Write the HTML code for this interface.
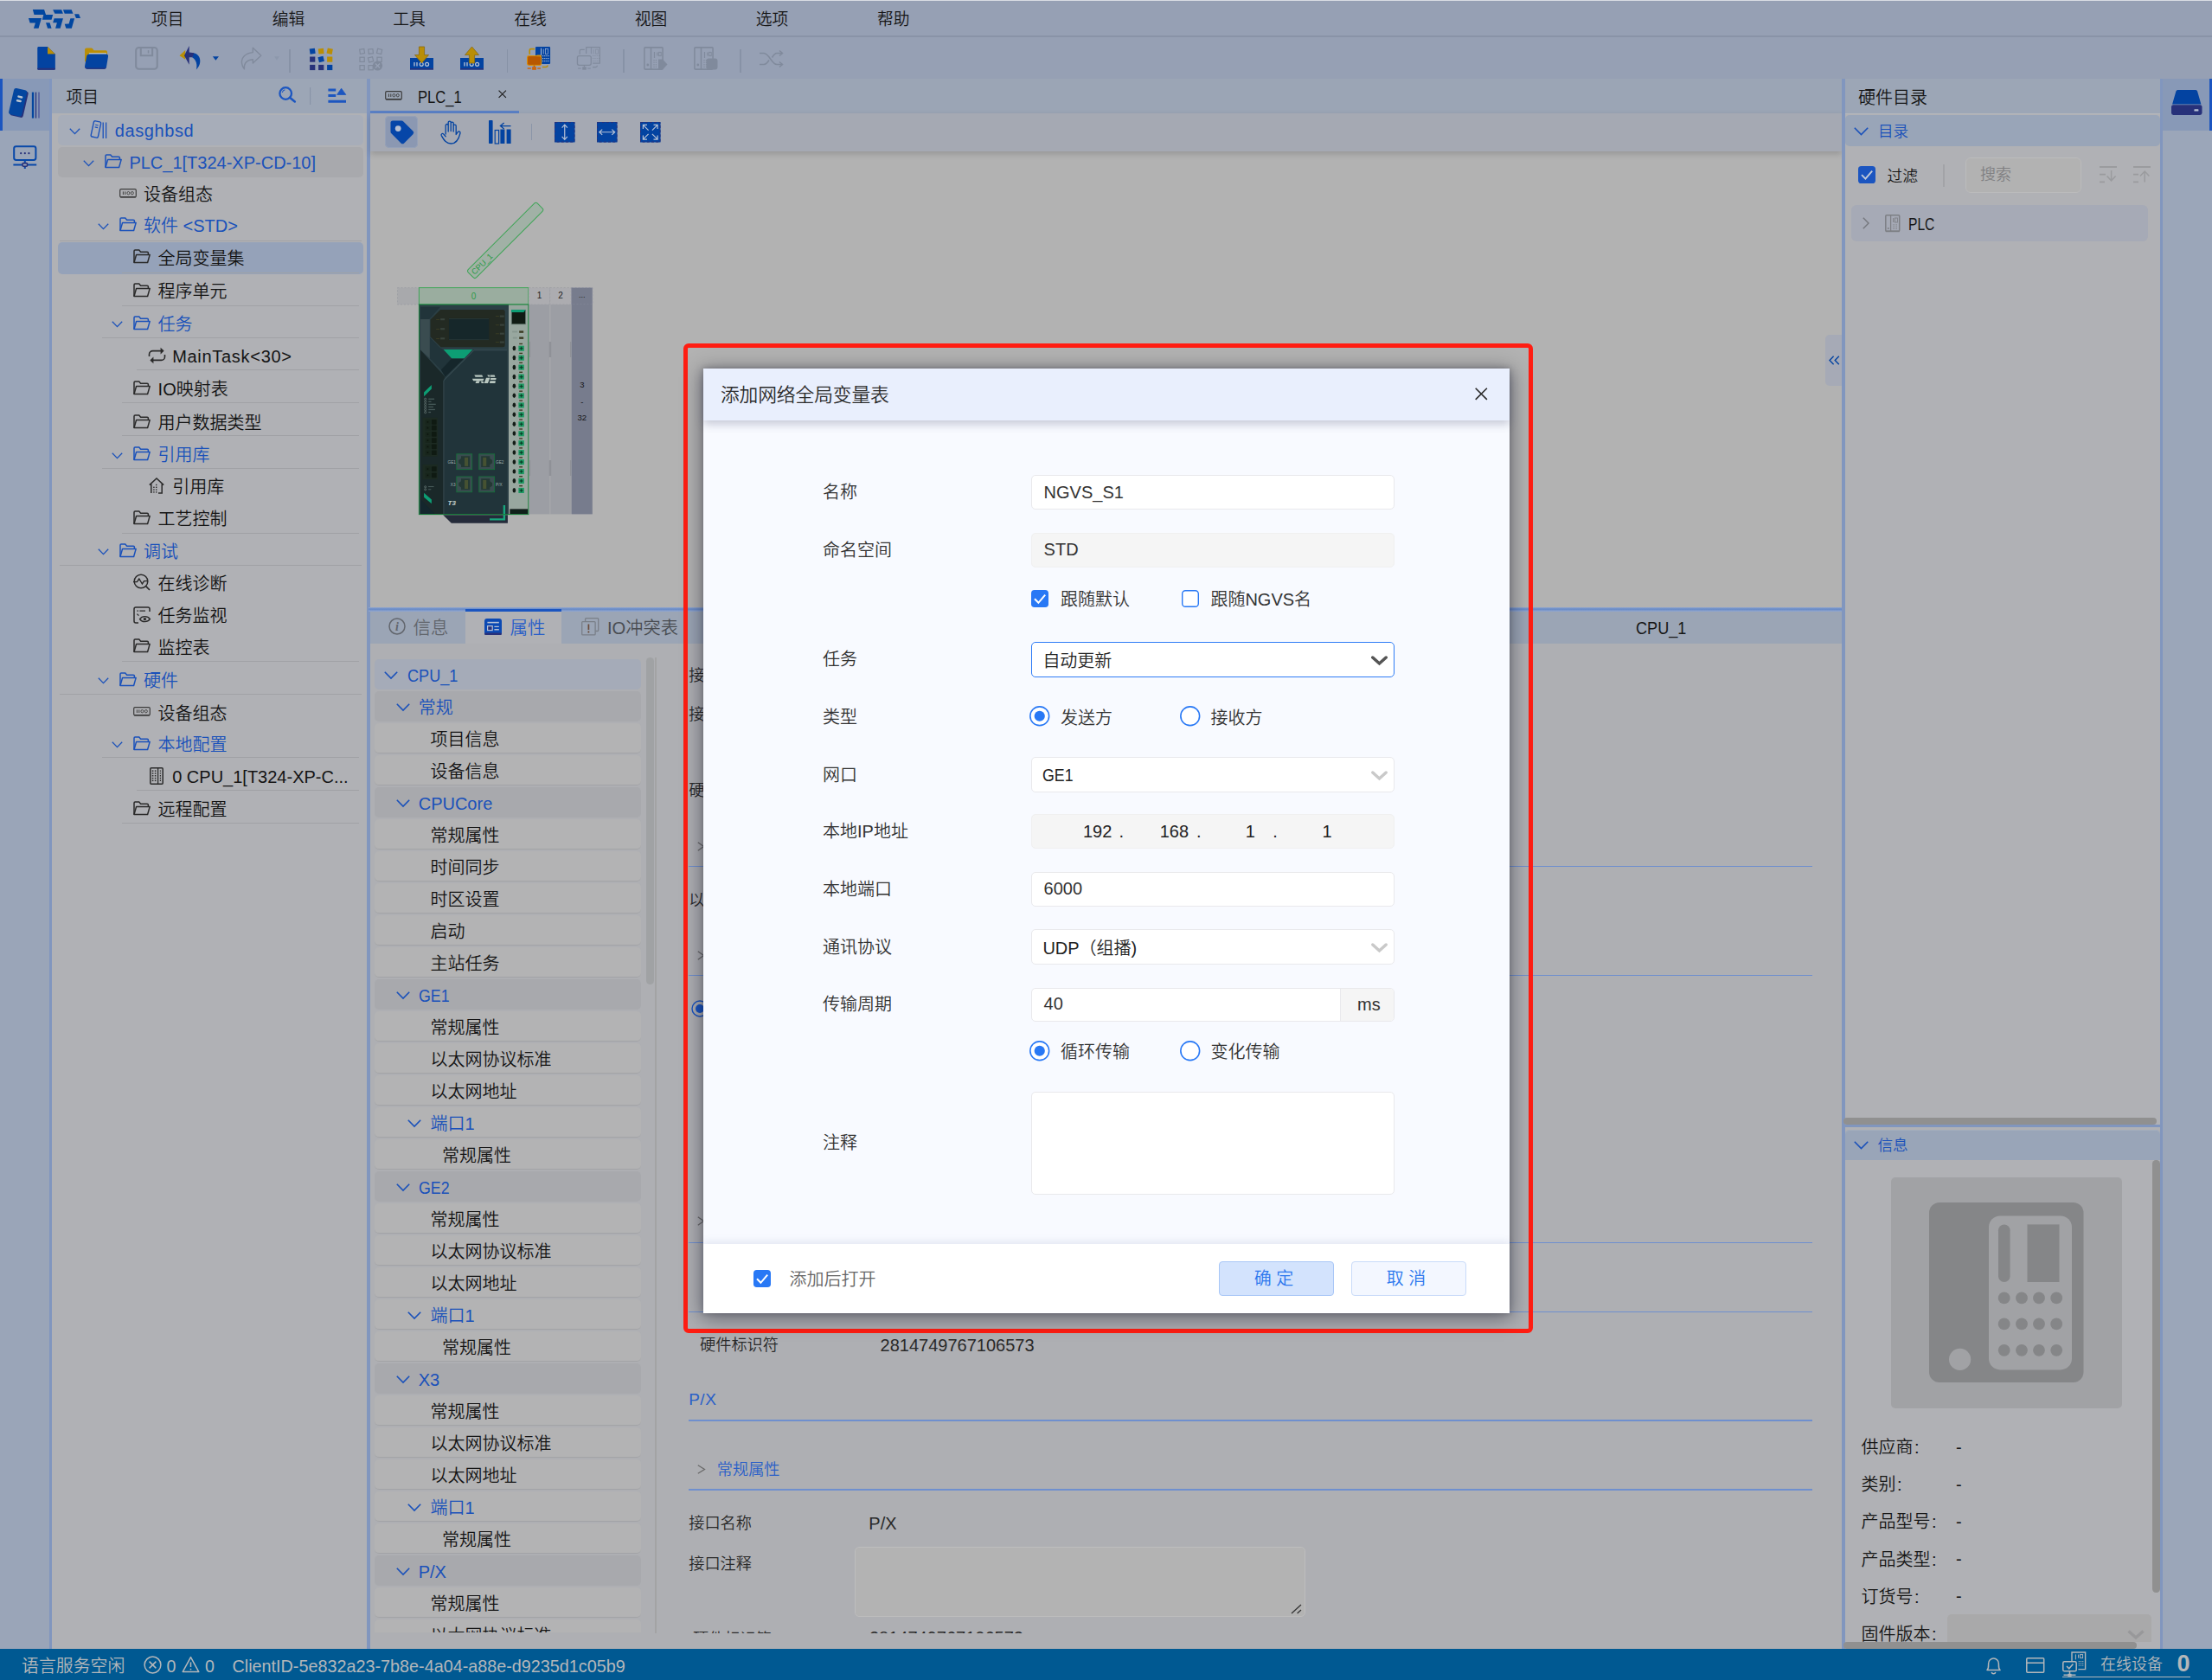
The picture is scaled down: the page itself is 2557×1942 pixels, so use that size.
<!DOCTYPE html>
<html lang="zh-CN"><head><meta charset="utf-8"><title>添加网络全局变量表</title>
<style>
html,body{margin:0;padding:0}
body{width:2557px;height:1942px;overflow:hidden;position:relative;background:#b0b1b5;
 font-family:"Liberation Sans","Noto Sans CJK SC",sans-serif;font-size:20px;color:#141414;font-weight:350}
.a{position:absolute;box-sizing:border-box}
.t{white-space:pre}
.b{color:#1a51ba}
svg{display:block;overflow:visible}
</style></head>
<body>
<div class="a" style="left:0px;top:0px;width:2557px;height:43px;background:#96a0b4;border-top:1px solid #d9dde4;border-bottom:2px solid #8993a7"></div>
<svg class="a" style="left:25px;top:5px" width="80" height="35" viewBox="0 0 2212 968" ><polygon points="355,165 720,165 775,330 1000,335 955,490 660,490 700,330 400,330" fill="#0046a0"/><polygon points="220,445 635,445 540,770 385,770 440,595 265,595" fill="#0046a0"/><polygon points="775,590 900,590 955,770 830,770" fill="#0046a0"/><polygon points="1000,170 1275,170 1325,300 1060,300" fill="#0046a0"/><polygon points="1325,170 1595,170 1645,300 1375,300" fill="#0046a0"/><polygon points="1690,310 1830,310 1880,440 1740,440" fill="#0046a0"/><polygon points="1040,450 1325,450 1235,770 1080,770 1130,590 1000,590" fill="#0046a0"/><polygon points="1560,450 1690,450 1600,770 1420,770 1375,628 1510,620" fill="#0046a0"/></svg>
<div class="a t" style="left:175px;top:2.7px;height:40px;line-height:40px;font-size:18.75px;color:#161616">项目</div>
<div class="a t" style="left:314.8px;top:2.7px;height:40px;line-height:40px;font-size:18.75px;color:#161616">编辑</div>
<div class="a t" style="left:454.3px;top:2.7px;height:40px;line-height:40px;font-size:18.75px;color:#161616">工具</div>
<div class="a t" style="left:594.3px;top:2.7px;height:40px;line-height:40px;font-size:18.75px;color:#161616">在线</div>
<div class="a t" style="left:733.8px;top:2.7px;height:40px;line-height:40px;font-size:18.75px;color:#161616">视图</div>
<div class="a t" style="left:873.8px;top:2.7px;height:40px;line-height:40px;font-size:18.75px;color:#161616">选项</div>
<div class="a t" style="left:1013.9px;top:2.7px;height:40px;line-height:40px;font-size:18.75px;color:#161616">帮助</div>
<div class="a" style="left:0px;top:43px;width:2557px;height:48px;background:#96a0b4"></div>
<svg class="a" style="left:30px;top:46px" width="170" height="44" viewBox="0 0 2212 573" ><path d="M190 105 H325 L440 215 V435 a18 18 0 0 1 -18 18 H190 a18 18 0 0 1 -18 -18 V123 a18 18 0 0 1 18 -18 Z" fill="#0343a1"/><path d="M172 425 H440 V437 a16 16 0 0 1 -16 16 H188 a16 16 0 0 1 -16 -16 Z" fill="#27317a"/><polygon points="325,105 440,215 325,215" fill="#ba8e06"/><path d="M318 215 H440 V232 H318 Z" fill="#0343a1" opacity="0.35"/><path d="M885 150 a25 25 0 0 1 25 -25 H985 a25 25 0 0 1 18 8 L1022 158 H1200 a22 22 0 0 1 22 22 V330 H885 Z" fill="#ba8e06"/><rect x="948" y="198" width="262" height="22" fill="#c9cfd8"/><path d="M960 215 H1205 a32 32 0 0 1 31 38 L1210 410 a36 36 0 0 1 -35 30 H920 a36 36 0 0 1 -35 -42 L912 250 a40 40 0 0 1 48 -35 Z" fill="#0343a1"/><path d="M886 405 C890 428 905 440 925 440 H1172 C1190 440 1204 430 1209 412 C1200 420 1190 424 1175 424 H922 C906 424 894 418 886 405 Z" fill="#27317a"/><rect x="1655" y="118" width="320" height="322" rx="44" fill="none" stroke="#808a9c" stroke-width="27"/><path d="M1728 120 V238 H1902 V120" fill="none" stroke="#808a9c" stroke-width="27"/><path d="M1842 158 V202" stroke="#808a9c" stroke-width="20"/></svg>
<svg class="a" style="left:196px;top:46px" width="150" height="44" viewBox="0 0 2212 649" ><polygon points="170,270 268,178 268,335" fill="#ba8e06"/><path d="M395 225 C470 225 530 290 520 380 C515 430 490 470 455 508 C475 440 460 340 385 300 Z" fill="#0343a1"/><polygon points="250,270 335,105 335,215 418,226 388,300 335,300 335,425" fill="#27317a"/><polygon points="735,285 840,285 787,352" fill="#0343a1"/><path d="M1560 270 L1420 135 V215 C1300 225 1220 300 1232 400 C1236 440 1250 470 1275 500 C1262 420 1300 345 1420 335 V400 Z" fill="none" stroke="#808a9c" stroke-width="20" stroke-linejoin="round"/><path d="M1300 480 C1270 400 1320 330 1415 322" fill="none" stroke="#808a9c" stroke-width="10" opacity="0.0"/><polygon points="1785,285 1872,285 1828,346" fill="#8d98ac"/></svg>
<div class="a" style="left:334px;top:57.2px;width:1.8px;height:26.4px;background:#8792a6"></div>
<svg class="a" style="left:358px;top:54.5px" width="27" height="27" viewBox="0 0 27 27" ><rect x="0.10000000000000009" y="1.1" width="6.2" height="6.2" fill="#0343a1" transform="rotate(-8 3.2 4.2)"/><rect x="10.1" y="1.1" width="6.2" height="6.2" fill="#ba8e06" transform="rotate(-6 13.2 4.2)"/><rect x="20.099999999999998" y="1.1" width="6.2" height="6.2" fill="#ba8e06" transform="rotate(12 23.2 4.2)"/><rect x="0.10000000000000009" y="10.500000000000002" width="6.2" height="6.2" fill="#27317a" transform="rotate(0 3.2 13.600000000000001)"/><rect x="10.1" y="10.500000000000002" width="6.2" height="6.2" fill="#0343a1" transform="rotate(-14 13.2 13.600000000000001)"/><rect x="20.099999999999998" y="10.500000000000002" width="6.2" height="6.2" fill="#ba8e06" transform="rotate(0 23.2 13.600000000000001)"/><rect x="0.10000000000000009" y="19.9" width="6.2" height="6.2" fill="#27317a" transform="rotate(0 3.2 23.0)"/><rect x="10.1" y="19.9" width="6.2" height="6.2" fill="#27317a" transform="rotate(0 13.2 23.0)"/><rect x="20.099999999999998" y="19.9" width="6.2" height="6.2" fill="#0343a1" transform="rotate(0 23.2 23.0)"/></svg>
<svg class="a" style="left:415px;top:54.5px" width="28" height="27" viewBox="0 0 28 27" ><rect x="1.0" y="1.8000000000000003" width="5.2" height="5.2" fill="none" stroke="#808a9c" stroke-width="1.2" transform="rotate(-8 3.6 4.4)"/><rect x="11.0" y="1.8000000000000003" width="5.2" height="5.2" fill="none" stroke="#808a9c" stroke-width="1.2" transform="rotate(-6 13.6 4.4)"/><rect x="21.0" y="1.8000000000000003" width="5.2" height="5.2" fill="none" stroke="#808a9c" stroke-width="1.2" transform="rotate(12 23.6 4.4)"/><rect x="1.0" y="11.200000000000001" width="5.2" height="5.2" fill="none" stroke="#808a9c" stroke-width="1.2" transform="rotate(0 3.6 13.8)"/><rect x="11.0" y="11.200000000000001" width="5.2" height="5.2" fill="none" stroke="#808a9c" stroke-width="1.2" transform="rotate(-14 13.6 13.8)"/><rect x="21.0" y="11.200000000000001" width="5.2" height="5.2" fill="none" stroke="#808a9c" stroke-width="1.2" transform="rotate(0 23.6 13.8)"/><rect x="1.0" y="20.6" width="5.2" height="5.2" fill="none" stroke="#808a9c" stroke-width="1.2" transform="rotate(0 3.6 23.200000000000003)"/><rect x="11.0" y="20.6" width="5.2" height="5.2" fill="none" stroke="#808a9c" stroke-width="1.2" transform="rotate(0 13.6 23.200000000000003)"/><circle cx="21.5" cy="21" r="5.6" fill="#808a9c"/><path d="M19 18.5l5 5M24 18.5l-5 5" stroke="#96a0b4" stroke-width="1.4"/></svg>
<svg class="a" style="left:474px;top:54px" width="27" height="27" viewBox="0 0 27 27" ><rect x="0" y="13" width="27" height="13.5" fill="#0343a1"/><rect x="0" y="25" width="27" height="1.5" fill="#27317a"/><path d="M5 18v4.6M8 18v4.6" stroke="#b9c4d6" stroke-width="1.3"/><circle cx="13.2" cy="20.3" r="2" fill="none" stroke="#b9c4d6" stroke-width="1.2"/><circle cx="19.6" cy="20.3" r="2" fill="none" stroke="#b9c4d6" stroke-width="1.2"/><path d="M10.4 0 H16.6 V9.5 H21.5 L13.5 19 L5.5 9.5 H10.4 Z" fill="#ba8e06" stroke="#8a6a10" stroke-width="0.8"/></svg>
<svg class="a" style="left:532px;top:54px" width="27" height="27" viewBox="0 0 27 27" ><rect x="0" y="13" width="27" height="13.5" fill="#0343a1"/><rect x="0" y="25" width="27" height="1.5" fill="#27317a"/><path d="M5 18v4.6M8 18v4.6" stroke="#b9c4d6" stroke-width="1.3"/><circle cx="13.2" cy="20.3" r="2" fill="none" stroke="#b9c4d6" stroke-width="1.2"/><circle cx="19.6" cy="20.3" r="2" fill="none" stroke="#b9c4d6" stroke-width="1.2"/><path d="M13.5 0 L21.5 9.5 H16.6 V19 H10.4 V9.5 H5.5 Z" fill="#ba8e06" stroke="#8a6a10" stroke-width="0.8"/></svg>
<div class="a" style="left:585.6px;top:57.2px;width:1.8px;height:26.4px;background:#8792a6"></div>
<svg class="a" style="left:600px;top:46px" width="100" height="44" viewBox="0 0 2212 973" ><rect x="420" y="175" width="378" height="445" rx="22" fill="#0343a1"/><path d="M565 215 V400" stroke="#c4cddd" stroke-width="20"/><path d="M625 235 V365" stroke="#c4cddd" stroke-width="14"/><rect x="672" y="235" width="72" height="130" fill="none" stroke="#c4cddd" stroke-width="13"/><rect x="600" y="400" width="24" height="24" fill="#c4cddd"/><rect x="600" y="466" width="24" height="24" fill="#c4cddd"/><rect x="600" y="532" width="24" height="24" fill="#c4cddd"/><rect x="647" y="400" width="24" height="24" fill="#c4cddd"/><rect x="647" y="466" width="24" height="24" fill="#c4cddd"/><rect x="647" y="532" width="24" height="24" fill="#c4cddd"/><rect x="694" y="400" width="24" height="24" fill="#c4cddd"/><rect x="694" y="466" width="24" height="24" fill="#c4cddd"/><rect x="694" y="532" width="24" height="24" fill="#c4cddd"/><rect x="741" y="400" width="24" height="24" fill="#c4cddd"/><rect x="741" y="466" width="24" height="24" fill="#c4cddd"/><rect x="741" y="532" width="24" height="24" fill="#c4cddd"/><path d="M270 370 V270 a35 35 0 0 1 35 -35 H400" fill="none" stroke="#ba8e06" stroke-width="36"/><path d="M595 695 H690 a40 40 0 0 0 40 -40" fill="none" stroke="#ba8e06" stroke-width="32"/><rect x="212" y="410" width="356" height="238" rx="42" fill="#b85800" stroke="#d98f0c" stroke-width="26"/><rect x="440" y="385" width="130" height="60" rx="30" fill="#d98f0c"/><rect x="230" y="428" width="320" height="202" rx="30" fill="#b85800"/><rect x="370" y="655" width="34" height="40" fill="#b85800"/><rect x="335" y="690" width="105" height="80" fill="#cf6408"/><rect x="215" y="715" width="90" height="32" fill="#cf6408"/><rect x="470" y="715" width="82" height="32" fill="#cf6408"/></svg>
<svg class="a" style="left:600px;top:46px" width="100" height="44" viewBox="0 0 2212 973" ><path d="M1718 355 V190 H2065 V600 H1885" fill="none" stroke="#808a9c" stroke-width="26" stroke-linejoin="round"/><path d="M1845 200 V355" stroke="#808a9c" stroke-width="20"/><path d="M1905 245 V355" stroke="#808a9c" stroke-width="14"/><rect x="1962" y="245" width="62" height="110" fill="none" stroke="#808a9c" stroke-width="14"/><rect x="1885" y="402" width="22" height="18" fill="#808a9c"/><rect x="1885" y="468" width="22" height="18" fill="#808a9c"/><rect x="1885" y="534" width="22" height="18" fill="#808a9c"/><rect x="1935" y="402" width="22" height="18" fill="#808a9c"/><rect x="1935" y="468" width="22" height="18" fill="#808a9c"/><rect x="1935" y="534" width="22" height="18" fill="#808a9c"/><rect x="1985" y="402" width="22" height="18" fill="#808a9c"/><rect x="1985" y="468" width="22" height="18" fill="#808a9c"/><rect x="1985" y="534" width="22" height="18" fill="#808a9c"/><rect x="2035" y="402" width="22" height="18" fill="#808a9c"/><rect x="2035" y="468" width="22" height="18" fill="#808a9c"/><rect x="2035" y="534" width="22" height="18" fill="#808a9c"/><path d="M1552 370 V285 a35 35 0 0 1 35 -35 H1675" fill="none" stroke="#808a9c" stroke-width="26"/><path d="M1880 700 H1960 a40 40 0 0 0 40 -40" fill="none" stroke="#808a9c" stroke-width="24"/><rect x="1492" y="412" width="350" height="236" rx="44" fill="none" stroke="#808a9c" stroke-width="28"/><rect x="1655" y="655" width="26" height="40" fill="#808a9c"/><rect x="1620" y="695" width="100" height="72" fill="#808a9c"/><rect x="1505" y="718" width="80" height="28" fill="#808a9c" opacity="0.8"/><rect x="1752" y="718" width="80" height="28" fill="#808a9c" opacity="0.8"/></svg>
<div class="a" style="left:720.2px;top:57.2px;width:1.8px;height:26.4px;background:#8792a6"></div>
<svg class="a" style="left:744px;top:54px" width="28" height="27" viewBox="0 0 28 27" ><rect x="0.9" y="0.9" width="21.2" height="25.2" rx="1" fill="none" stroke="#808a9c" stroke-width="1.6"/><path d="M8.5 1v25" stroke="#808a9c" stroke-width="1.6"/><circle cx="4.8" cy="21" r="1.4" fill="#808a9c"/><path d="M12.5 6v7M15.8 6.4v4.2" stroke="#808a9c" stroke-width="1.2"/><rect x="17.6" y="6.4" width="2.6" height="4.2" fill="none" stroke="#808a9c" stroke-width="1"/><rect x="11.4" y="15.0" width="1.2" height="1.2" fill="#808a9c"/><rect x="11.4" y="17.6" width="1.2" height="1.2" fill="#808a9c"/><rect x="11.4" y="20.2" width="1.2" height="1.2" fill="#808a9c"/><rect x="11.4" y="22.8" width="1.2" height="1.2" fill="#808a9c"/><rect x="13.8" y="15.0" width="1.2" height="1.2" fill="#808a9c"/><rect x="13.8" y="17.6" width="1.2" height="1.2" fill="#808a9c"/><rect x="13.8" y="20.2" width="1.2" height="1.2" fill="#808a9c"/><rect x="13.8" y="22.8" width="1.2" height="1.2" fill="#808a9c"/><path d="M17 14.5 H22 L27.5 20.5 L22 26.5 H17 Z" fill="#808a9c"/></svg>
<svg class="a" style="left:802px;top:54px" width="28" height="27" viewBox="0 0 28 27" ><rect x="0.9" y="0.9" width="21.2" height="25.2" rx="1" fill="none" stroke="#808a9c" stroke-width="1.6"/><path d="M8.5 1v25" stroke="#808a9c" stroke-width="1.6"/><circle cx="4.8" cy="21" r="1.4" fill="#808a9c"/><path d="M12.5 6v7M15.8 6.4v4.2" stroke="#808a9c" stroke-width="1.2"/><rect x="17.6" y="6.4" width="2.6" height="4.2" fill="none" stroke="#808a9c" stroke-width="1"/><rect x="11.4" y="15.0" width="1.2" height="1.2" fill="#808a9c"/><rect x="11.4" y="17.6" width="1.2" height="1.2" fill="#808a9c"/><rect x="11.4" y="20.2" width="1.2" height="1.2" fill="#808a9c"/><rect x="11.4" y="22.8" width="1.2" height="1.2" fill="#808a9c"/><rect x="13.8" y="15.0" width="1.2" height="1.2" fill="#808a9c"/><rect x="13.8" y="17.6" width="1.2" height="1.2" fill="#808a9c"/><rect x="13.8" y="20.2" width="1.2" height="1.2" fill="#808a9c"/><rect x="13.8" y="22.8" width="1.2" height="1.2" fill="#808a9c"/><rect x="14.5" y="13.5" width="13" height="13" rx="3" fill="#808a9c"/></svg>
<div class="a" style="left:855.2px;top:57.2px;width:1.8px;height:26.4px;background:#8792a6"></div>
<svg class="a" style="left:878px;top:58px" width="28" height="20" viewBox="0 0 28 20" ><path d="M0 3.5 H5 C11 3.5 14 16.5 20 16.5 H26 M0 16.5 H5 C8 16.5 9.5 14 11 11.5 M14.5 8.5 C16 6 17.5 3.5 20 3.5 H26" fill="none" stroke="#808a9c" stroke-width="1.5"/><path d="M23 0.5 L26.5 3.5 L23 6.5 M23 13.5 L26.5 16.5 L23 19.5" fill="none" stroke="#808a9c" stroke-width="1.5"/></svg>
<div class="a" style="left:0px;top:91px;width:57px;height:1815px;background:#9aa5b8"></div>
<div class="a" style="left:0px;top:91px;width:57px;height:60px;background:#8899b7"></div>
<div class="a" style="left:0px;top:91px;width:3px;height:60px;background:#1b55c0"></div>
<svg class="a" style="left:11px;top:102px" width="36" height="36" viewBox="0 0 36 36" ><g transform="rotate(13 11.5 18)"><rect x="3.4" y="2.2" width="15.4" height="31" rx="2.6" fill="#27317a"/><rect x="1.6" y="1.2" width="15.4" height="31" rx="2.6" fill="#04469f"/><rect x="7.4" y="8.8" width="6.2" height="2.5" rx="1.25" fill="#b9c4d0"/><rect x="7" y="13.6" width="6.2" height="2.5" rx="1.25" fill="#b9c4d0"/></g><path d="M27 4.6v30" stroke="#04469f" stroke-width="2.3"/><path d="M30.5 4.6v30" stroke="#27317a" stroke-width="1.3"/><path d="M34 4.6v30" stroke="#56609f" stroke-width="1.6"/></svg>
<svg class="a" style="left:15px;top:168px" width="28" height="27" viewBox="0 0 28 27" ><rect x="1.2" y="1.2" width="25.2" height="15.8" rx="2.4" fill="none" stroke="#0848a8" stroke-width="2"/><circle cx="9.2" cy="9.2" r="1.1" fill="#27317a"/><circle cx="13.8" cy="9.2" r="1.1" fill="#27317a"/><circle cx="18.4" cy="9.2" r="1.1" fill="#27317a"/><path d="M13.8 17v4M0.4 22.4h10.5M16.8 22.4h10.4M13.8 24v3" stroke="#0848a8" stroke-width="2"/><rect x="11" y="20.6" width="5.6" height="3.6" rx="1.2" fill="none" stroke="#27317a" stroke-width="1.6"/></svg>
<div class="a" style="left:56.8px;top:91px;width:3.4px;height:1815px;background:#8196be"></div>
<div class="a" style="left:60px;top:91px;width:365px;height:40px;background:#9ca6b6"></div>
<div class="a t" style="left:76.5px;top:93.2px;height:40px;line-height:40px;font-size:18.75px;color:#161616">项目</div>
<svg class="a" style="left:322px;top:100px" width="20" height="18.5" viewBox="0 0 20 18.5" ><circle cx="8.2" cy="8" r="6.8" fill="none" stroke="#1c56c0" stroke-width="2.3"/><path d="M13 12.8 L18.8 17.4" stroke="#1c56c0" stroke-width="2.6" stroke-linecap="round"/><path d="M4.2 7 a4.2 4.2 0 0 1 3.2 -3.2" fill="none" stroke="#1c56c0" stroke-width="1.1"/></svg>
<div class="a" style="left:358px;top:101px;width:2.4px;height:19.5px;background:linear-gradient(90deg,#8590a3,#8d98ab 55%,#a7b0c0)"></div>
<svg class="a" style="left:379px;top:101px" width="22" height="18.5" viewBox="0 0 22 18.5" ><path d="M0.4 2.9h8.8M0.4 9.4h8.8M0.4 16.2h20.6" stroke="#1c56c0" stroke-width="3"/><path d="M10.6 8.4 L15.6 1.2 L20.8 8.4 Z" fill="#1c56c0" stroke="#1c56c0" stroke-width="0.8" stroke-linejoin="round"/></svg>
<div class="a" style="left:60px;top:131px;width:365px;height:1775px;background:#b0b1b5"></div>
<div class="a" style="left:424.4px;top:91px;width:3.6px;height:1815px;background:#8196be"></div>
<div class="a" style="left:67px;top:133.2px;width:353px;height:34.4px;background:#a7adb9;border-radius:5px"></div>
<svg class="a" style="left:79.6px;top:147.6px" width="13" height="7.6" viewBox="0 0 13 7.6" ><path d="M0.8 0.8 L6.5 6.6 L12.2 0.8" fill="none" stroke="#1a51ba" stroke-width="1.3"/></svg>
<svg class="a" style="left:105.3px;top:139.2px" width="19" height="22" viewBox="0 0 19 22" ><g transform="rotate(12 6 11)"><rect x="1.6" y="1.2" width="8.4" height="18.6" rx="1.6" fill="none" stroke="#1a51ba" stroke-width="1.4"/><path d="M4 5.6h3.6M4 8.2h3.6" stroke="#1a51ba" stroke-width="1.1"/></g><path d="M14.2 2.5v18.5M17.6 2.5v18.5" stroke="#1a51ba" stroke-width="1.3"/></svg>
<div class="a t" style="left:132.8px;top:134.3px;height:34.4px;line-height:34.4px;color:#1a51ba;letter-spacing:0.6px">dasghbsd</div>
<div class="a" style="left:67px;top:170.2px;width:353px;height:34.4px;background:#a8a9ad;border-radius:5px"></div>
<svg class="a" style="left:96.19999999999999px;top:184.6px" width="13" height="7.6" viewBox="0 0 13 7.6" ><path d="M0.8 0.8 L6.5 6.6 L12.2 0.8" fill="none" stroke="#1a51ba" stroke-width="1.3"/></svg>
<svg class="a" style="left:120.9px;top:178.2px" width="20.5" height="17" viewBox="0 0 20.5 17" ><path d="M1 15.5 V2.2 a1.2 1.2 0 0 1 1.2 -1.2 h4.6 l1.8 2.2 h7.6 a1.2 1.2 0 0 1 1.2 1.2 v2" fill="none" stroke="#1a51ba" stroke-width="1.5" stroke-linejoin="round"/><path d="M1 15.5 L3.6 6.4 H19.2 L16.6 15.5 Z" fill="none" stroke="#1a51ba" stroke-width="1.5" stroke-linejoin="round"/></svg>
<div class="a t" style="left:149.4px;top:171.3px;height:34.4px;line-height:34.4px;color:#1a51ba">PLC_1[T324-XP-CD-10]</div>
<svg class="a" style="left:137.5px;top:218.3px" width="20" height="11" viewBox="0 0 20 11" ><rect x="0.7" y="0.7" width="18.6" height="9.2" rx="1.4" fill="none" stroke="#3c3c3c" stroke-width="1.2"/><path d="M1 9.7h18" stroke="#3c3c3c" stroke-width="1.5"/><path d="M4.4 3.4v3.6M6.8 3.4v3.6" stroke="#3c3c3c" stroke-width="1"/><ellipse cx="10.4" cy="5.2" rx="1.5" ry="1.7" fill="none" stroke="#3c3c3c" stroke-width="0.9"/><ellipse cx="14.8" cy="5.2" rx="1.5" ry="1.7" fill="none" stroke="#3c3c3c" stroke-width="0.9"/></svg>
<div class="a t" style="left:166.0px;top:208.4px;height:34.4px;line-height:34.4px;color:#141414">设备组态</div>
<svg class="a" style="left:112.8px;top:257.7px" width="13" height="7.6" viewBox="0 0 13 7.6" ><path d="M0.8 0.8 L6.5 6.6 L12.2 0.8" fill="none" stroke="#1a51ba" stroke-width="1.3"/></svg>
<svg class="a" style="left:137.5px;top:251.3px" width="20.5" height="17" viewBox="0 0 20.5 17" ><path d="M1 15.5 V2.2 a1.2 1.2 0 0 1 1.2 -1.2 h4.6 l1.8 2.2 h7.6 a1.2 1.2 0 0 1 1.2 1.2 v2" fill="none" stroke="#1a51ba" stroke-width="1.5" stroke-linejoin="round"/><path d="M1 15.5 L3.6 6.4 H19.2 L16.6 15.5 Z" fill="none" stroke="#1a51ba" stroke-width="1.5" stroke-linejoin="round"/></svg>
<div class="a t" style="left:166.0px;top:244.4px;height:34.4px;line-height:34.4px;color:#1a51ba">软件 &lt;STD&gt;</div>
<div class="a" style="left:69px;top:277.7px;width:349px;height:1.2px;background:#a0a1a5"></div>
<div class="a" style="left:67px;top:280.3px;width:353px;height:36.4px;background:#95a2b9;border-radius:5px"></div>
<svg class="a" style="left:154.1px;top:288.4px" width="20.5" height="17" viewBox="0 0 20.5 17" ><path d="M1 15.5 V2.2 a1.2 1.2 0 0 1 1.2 -1.2 h4.6 l1.8 2.2 h7.6 a1.2 1.2 0 0 1 1.2 1.2 v2" fill="none" stroke="#2a2a2a" stroke-width="1.5" stroke-linejoin="round"/><path d="M1 15.5 L3.6 6.4 H19.2 L16.6 15.5 Z" fill="none" stroke="#2a2a2a" stroke-width="1.5" stroke-linejoin="round"/></svg>
<div class="a t" style="left:182.6px;top:281.5px;height:34.4px;line-height:34.4px;color:#141414">全局变量集</div>
<div class="a" style="left:141px;top:314.8px;width:274px;height:1.2px;background:#a0a1a5"></div>
<svg class="a" style="left:154.1px;top:326.6px" width="20.5" height="17" viewBox="0 0 20.5 17" ><path d="M1 15.5 V2.2 a1.2 1.2 0 0 1 1.2 -1.2 h4.6 l1.8 2.2 h7.6 a1.2 1.2 0 0 1 1.2 1.2 v2" fill="none" stroke="#2a2a2a" stroke-width="1.5" stroke-linejoin="round"/><path d="M1 15.5 L3.6 6.4 H19.2 L16.6 15.5 Z" fill="none" stroke="#2a2a2a" stroke-width="1.5" stroke-linejoin="round"/></svg>
<div class="a t" style="left:182.6px;top:319.7px;height:34.4px;line-height:34.4px;color:#141414">程序单元</div>
<div class="a" style="left:141px;top:352.7px;width:274px;height:1.2px;background:#a0a1a5"></div>
<svg class="a" style="left:129.4px;top:371.0px" width="13" height="7.6" viewBox="0 0 13 7.6" ><path d="M0.8 0.8 L6.5 6.6 L12.2 0.8" fill="none" stroke="#1a51ba" stroke-width="1.3"/></svg>
<svg class="a" style="left:154.1px;top:364.6px" width="20.5" height="17" viewBox="0 0 20.5 17" ><path d="M1 15.5 V2.2 a1.2 1.2 0 0 1 1.2 -1.2 h4.6 l1.8 2.2 h7.6 a1.2 1.2 0 0 1 1.2 1.2 v2" fill="none" stroke="#1a51ba" stroke-width="1.5" stroke-linejoin="round"/><path d="M1 15.5 L3.6 6.4 H19.2 L16.6 15.5 Z" fill="none" stroke="#1a51ba" stroke-width="1.5" stroke-linejoin="round"/></svg>
<div class="a t" style="left:182.6px;top:357.7px;height:34.4px;line-height:34.4px;color:#1a51ba">任务</div>
<div class="a" style="left:118px;top:389.8px;width:297px;height:1.2px;background:#a0a1a5"></div>
<svg class="a" style="left:170.7px;top:401.3px" width="21" height="20" viewBox="0 0 21 20" ><path d="M1.5 11 V8.6 a4 4 0 0 1 4 -4 H17.5 M19.5 9 v2.4 a4 4 0 0 1 -4 4 H3.5" fill="none" stroke="#2a2a2a" stroke-width="1.6"/><path d="M14.6 0.8 L18.6 4.6 L14.6 8.4 Z M6.4 11.6 L2.4 15.4 L6.4 19.2 Z" fill="#2a2a2a"/></svg>
<div class="a t" style="left:199.2px;top:395.4px;height:34.4px;line-height:34.4px;color:#141414;letter-spacing:0.7px">MainTask&lt;30&gt;</div>
<div class="a" style="left:158px;top:427.1px;width:257px;height:1.2px;background:#a0a1a5"></div>
<svg class="a" style="left:154.1px;top:440.2px" width="20.5" height="17" viewBox="0 0 20.5 17" ><path d="M1 15.5 V2.2 a1.2 1.2 0 0 1 1.2 -1.2 h4.6 l1.8 2.2 h7.6 a1.2 1.2 0 0 1 1.2 1.2 v2" fill="none" stroke="#2a2a2a" stroke-width="1.5" stroke-linejoin="round"/><path d="M1 15.5 L3.6 6.4 H19.2 L16.6 15.5 Z" fill="none" stroke="#2a2a2a" stroke-width="1.5" stroke-linejoin="round"/></svg>
<div class="a t" style="left:182.6px;top:433.3px;height:34.4px;line-height:34.4px;color:#141414">IO映射表</div>
<div class="a" style="left:141px;top:464.8px;width:274px;height:1.2px;background:#a0a1a5"></div>
<svg class="a" style="left:154.1px;top:478.7px" width="20.5" height="17" viewBox="0 0 20.5 17" ><path d="M1 15.5 V2.2 a1.2 1.2 0 0 1 1.2 -1.2 h4.6 l1.8 2.2 h7.6 a1.2 1.2 0 0 1 1.2 1.2 v2" fill="none" stroke="#2a2a2a" stroke-width="1.5" stroke-linejoin="round"/><path d="M1 15.5 L3.6 6.4 H19.2 L16.6 15.5 Z" fill="none" stroke="#2a2a2a" stroke-width="1.5" stroke-linejoin="round"/></svg>
<div class="a t" style="left:182.6px;top:471.8px;height:34.4px;line-height:34.4px;color:#141414">用户数据类型</div>
<div class="a" style="left:141px;top:502.7px;width:274px;height:1.2px;background:#a0a1a5"></div>
<svg class="a" style="left:129.4px;top:522.6px" width="13" height="7.6" viewBox="0 0 13 7.6" ><path d="M0.8 0.8 L6.5 6.6 L12.2 0.8" fill="none" stroke="#1a51ba" stroke-width="1.3"/></svg>
<svg class="a" style="left:154.1px;top:516.2px" width="20.5" height="17" viewBox="0 0 20.5 17" ><path d="M1 15.5 V2.2 a1.2 1.2 0 0 1 1.2 -1.2 h4.6 l1.8 2.2 h7.6 a1.2 1.2 0 0 1 1.2 1.2 v2" fill="none" stroke="#1a51ba" stroke-width="1.5" stroke-linejoin="round"/><path d="M1 15.5 L3.6 6.4 H19.2 L16.6 15.5 Z" fill="none" stroke="#1a51ba" stroke-width="1.5" stroke-linejoin="round"/></svg>
<div class="a t" style="left:182.6px;top:509.3px;height:34.4px;line-height:34.4px;color:#1a51ba">引用库</div>
<div class="a" style="left:118px;top:540.7px;width:297px;height:1.2px;background:#a0a1a5"></div>
<svg class="a" style="left:171.7px;top:551.7px" width="18" height="19" viewBox="0 0 18 19" ><path d="M0.8 8.6 L9 1 L17.2 8.6 M2.8 7.4 V18 M15.2 7.4 V18 H11" fill="none" stroke="#2a2a2a" stroke-width="1.5"/><rect x="5.2" y="10.6" width="1.4" height="1.4" fill="#2a2a2a"/><rect x="5.2" y="13.399999999999999" width="1.4" height="1.4" fill="#2a2a2a"/><rect x="5.2" y="16.2" width="1.4" height="1.4" fill="#2a2a2a"/><rect x="8.0" y="10.6" width="1.4" height="1.4" fill="#2a2a2a"/><rect x="8.0" y="13.399999999999999" width="1.4" height="1.4" fill="#2a2a2a"/><rect x="8.0" y="16.2" width="1.4" height="1.4" fill="#2a2a2a"/><rect x="8" y="7.8" width="1.4" height="1.4" fill="#2a2a2a"/></svg>
<div class="a t" style="left:199.2px;top:545.8px;height:34.4px;line-height:34.4px;color:#141414">引用库</div>
<svg class="a" style="left:154.1px;top:590.2px" width="20.5" height="17" viewBox="0 0 20.5 17" ><path d="M1 15.5 V2.2 a1.2 1.2 0 0 1 1.2 -1.2 h4.6 l1.8 2.2 h7.6 a1.2 1.2 0 0 1 1.2 1.2 v2" fill="none" stroke="#2a2a2a" stroke-width="1.5" stroke-linejoin="round"/><path d="M1 15.5 L3.6 6.4 H19.2 L16.6 15.5 Z" fill="none" stroke="#2a2a2a" stroke-width="1.5" stroke-linejoin="round"/></svg>
<div class="a t" style="left:182.6px;top:583.3px;height:34.4px;line-height:34.4px;color:#141414">工艺控制</div>
<div class="a" style="left:141px;top:615.6px;width:274px;height:1.2px;background:#a0a1a5"></div>
<svg class="a" style="left:112.8px;top:634.4px" width="13" height="7.6" viewBox="0 0 13 7.6" ><path d="M0.8 0.8 L6.5 6.6 L12.2 0.8" fill="none" stroke="#1a51ba" stroke-width="1.3"/></svg>
<svg class="a" style="left:137.5px;top:628.0px" width="20.5" height="17" viewBox="0 0 20.5 17" ><path d="M1 15.5 V2.2 a1.2 1.2 0 0 1 1.2 -1.2 h4.6 l1.8 2.2 h7.6 a1.2 1.2 0 0 1 1.2 1.2 v2" fill="none" stroke="#1a51ba" stroke-width="1.5" stroke-linejoin="round"/><path d="M1 15.5 L3.6 6.4 H19.2 L16.6 15.5 Z" fill="none" stroke="#1a51ba" stroke-width="1.5" stroke-linejoin="round"/></svg>
<div class="a t" style="left:166.0px;top:621.1px;height:34.4px;line-height:34.4px;color:#1a51ba">调试</div>
<div class="a" style="left:69px;top:652.9px;width:349px;height:1.2px;background:#a0a1a5"></div>
<svg class="a" style="left:154.1px;top:663.4px" width="20" height="20" viewBox="0 0 20 20" ><circle cx="9" cy="9" r="7.8" fill="none" stroke="#2a2a2a" stroke-width="1.5"/><path d="M14.6 14.6 L19 19" stroke="#2a2a2a" stroke-width="1.7"/><path d="M0 9.6 H4.4 L6.8 6 L10.4 12 L12.6 8.6 H16" fill="none" stroke="#2a2a2a" stroke-width="1.4"/></svg>
<div class="a t" style="left:182.6px;top:657.5px;height:34.4px;line-height:34.4px;color:#141414">在线诊断</div>
<svg class="a" style="left:154.1px;top:700.6px" width="20" height="20" viewBox="0 0 20 20" ><path d="M19 6 V3 a2 2 0 0 0 -2 -2 H3 a2 2 0 0 0 -2 2 V17 a2 2 0 0 0 2 2 H6" fill="none" stroke="#2a2a2a" stroke-width="1.5"/><path d="M4.4 5.2 h1.6 M7.4 5.2 H14 M4.4 8.6 l2 2" stroke="#2a2a2a" stroke-width="1.3"/><path d="M7.6 14.6 C10 10.6 16.6 10.6 19.4 14.6 C16.6 18.6 10 18.6 7.6 14.6 Z" fill="none" stroke="#2a2a2a" stroke-width="1.4"/><circle cx="13.4" cy="14.6" r="1.7" fill="#2a2a2a"/></svg>
<div class="a t" style="left:182.6px;top:694.7px;height:34.4px;line-height:34.4px;color:#141414">任务监视</div>
<svg class="a" style="left:154.1px;top:738.4px" width="20.5" height="17" viewBox="0 0 20.5 17" ><path d="M1 15.5 V2.2 a1.2 1.2 0 0 1 1.2 -1.2 h4.6 l1.8 2.2 h7.6 a1.2 1.2 0 0 1 1.2 1.2 v2" fill="none" stroke="#2a2a2a" stroke-width="1.5" stroke-linejoin="round"/><path d="M1 15.5 L3.6 6.4 H19.2 L16.6 15.5 Z" fill="none" stroke="#2a2a2a" stroke-width="1.5" stroke-linejoin="round"/></svg>
<div class="a t" style="left:182.6px;top:731.5px;height:34.4px;line-height:34.4px;color:#141414">监控表</div>
<div class="a" style="left:141px;top:764.0px;width:274px;height:1.2px;background:#a0a1a5"></div>
<svg class="a" style="left:112.8px;top:783.3px" width="13" height="7.6" viewBox="0 0 13 7.6" ><path d="M0.8 0.8 L6.5 6.6 L12.2 0.8" fill="none" stroke="#1a51ba" stroke-width="1.3"/></svg>
<svg class="a" style="left:137.5px;top:776.9px" width="20.5" height="17" viewBox="0 0 20.5 17" ><path d="M1 15.5 V2.2 a1.2 1.2 0 0 1 1.2 -1.2 h4.6 l1.8 2.2 h7.6 a1.2 1.2 0 0 1 1.2 1.2 v2" fill="none" stroke="#1a51ba" stroke-width="1.5" stroke-linejoin="round"/><path d="M1 15.5 L3.6 6.4 H19.2 L16.6 15.5 Z" fill="none" stroke="#1a51ba" stroke-width="1.5" stroke-linejoin="round"/></svg>
<div class="a t" style="left:166.0px;top:770.0px;height:34.4px;line-height:34.4px;color:#1a51ba">硬件</div>
<div class="a" style="left:69px;top:801.5px;width:349px;height:1.2px;background:#a0a1a5"></div>
<svg class="a" style="left:154.1px;top:817.4px" width="20" height="11" viewBox="0 0 20 11" ><rect x="0.7" y="0.7" width="18.6" height="9.2" rx="1.4" fill="none" stroke="#3c3c3c" stroke-width="1.2"/><path d="M1 9.7h18" stroke="#3c3c3c" stroke-width="1.5"/><path d="M4.4 3.4v3.6M6.8 3.4v3.6" stroke="#3c3c3c" stroke-width="1"/><ellipse cx="10.4" cy="5.2" rx="1.5" ry="1.7" fill="none" stroke="#3c3c3c" stroke-width="0.9"/><ellipse cx="14.8" cy="5.2" rx="1.5" ry="1.7" fill="none" stroke="#3c3c3c" stroke-width="0.9"/></svg>
<div class="a t" style="left:182.6px;top:807.5px;height:34.4px;line-height:34.4px;color:#141414">设备组态</div>
<svg class="a" style="left:129.4px;top:857.3px" width="13" height="7.6" viewBox="0 0 13 7.6" ><path d="M0.8 0.8 L6.5 6.6 L12.2 0.8" fill="none" stroke="#1a51ba" stroke-width="1.3"/></svg>
<svg class="a" style="left:154.1px;top:850.9px" width="20.5" height="17" viewBox="0 0 20.5 17" ><path d="M1 15.5 V2.2 a1.2 1.2 0 0 1 1.2 -1.2 h4.6 l1.8 2.2 h7.6 a1.2 1.2 0 0 1 1.2 1.2 v2" fill="none" stroke="#1a51ba" stroke-width="1.5" stroke-linejoin="round"/><path d="M1 15.5 L3.6 6.4 H19.2 L16.6 15.5 Z" fill="none" stroke="#1a51ba" stroke-width="1.5" stroke-linejoin="round"/></svg>
<div class="a t" style="left:182.6px;top:844.0px;height:34.4px;line-height:34.4px;color:#1a51ba">本地配置</div>
<div class="a" style="left:118px;top:874.8px;width:297px;height:1.2px;background:#a0a1a5"></div>
<svg class="a" style="left:172.7px;top:886.6px" width="16" height="20" viewBox="0 0 16 20" ><rect x="0.8" y="0.8" width="14.4" height="18.4" rx="1" fill="none" stroke="#2a2a2a" stroke-width="1.5"/><path d="M9.6 1v18" stroke="#2a2a2a" stroke-width="1.3"/><rect x="2.8" y="3.4" width="1.6" height="1.5" fill="#2a2a2a"/><rect x="2.8" y="6.199999999999999" width="1.6" height="1.5" fill="#2a2a2a"/><rect x="2.8" y="9.0" width="1.6" height="1.5" fill="#2a2a2a"/><rect x="2.8" y="11.799999999999999" width="1.6" height="1.5" fill="#2a2a2a"/><rect x="2.8" y="14.6" width="1.6" height="1.5" fill="#2a2a2a"/><rect x="5.8" y="3.4" width="1.6" height="1.5" fill="#2a2a2a"/><rect x="5.8" y="6.199999999999999" width="1.6" height="1.5" fill="#2a2a2a"/><rect x="5.8" y="9.0" width="1.6" height="1.5" fill="#2a2a2a"/><rect x="5.8" y="11.799999999999999" width="1.6" height="1.5" fill="#2a2a2a"/><rect x="5.8" y="14.6" width="1.6" height="1.5" fill="#2a2a2a"/><path d="M12.4 3.4v13" stroke="#2a2a2a" stroke-width="1.2" stroke-dasharray="1.4 1.4"/></svg>
<div class="a t" style="left:199.2px;top:880.7px;height:34.4px;line-height:34.4px;color:#141414">0 CPU_1[T324-XP-C...</div>
<div class="a" style="left:158px;top:912.5px;width:257px;height:1.2px;background:#a0a1a5"></div>
<svg class="a" style="left:154.1px;top:925.9px" width="20.5" height="17" viewBox="0 0 20.5 17" ><path d="M1 15.5 V2.2 a1.2 1.2 0 0 1 1.2 -1.2 h4.6 l1.8 2.2 h7.6 a1.2 1.2 0 0 1 1.2 1.2 v2" fill="none" stroke="#2a2a2a" stroke-width="1.5" stroke-linejoin="round"/><path d="M1 15.5 L3.6 6.4 H19.2 L16.6 15.5 Z" fill="none" stroke="#2a2a2a" stroke-width="1.5" stroke-linejoin="round"/></svg>
<div class="a t" style="left:182.6px;top:919.0px;height:34.4px;line-height:34.4px;color:#141414">远程配置</div>
<div class="a" style="left:141px;top:950.7px;width:274px;height:1.2px;background:#a0a1a5"></div>
<div class="a" style="left:428px;top:91px;width:1701px;height:40px;background:#9ba5b5"></div>
<div class="a" style="left:428px;top:128px;width:172px;height:3px;background:#5b81c6"></div>
<svg class="a" style="left:445px;top:105px" width="20" height="11" viewBox="0 0 20 11" ><rect x="0.7" y="0.7" width="18.6" height="9.2" rx="1.4" fill="none" stroke="#3c3c3c" stroke-width="1.2"/><path d="M1 9.7h18" stroke="#3c3c3c" stroke-width="1.5"/><path d="M4.4 3.4v3.6M6.8 3.4v3.6" stroke="#3c3c3c" stroke-width="1"/><ellipse cx="10.4" cy="5.2" rx="1.5" ry="1.7" fill="none" stroke="#3c3c3c" stroke-width="0.9"/><ellipse cx="14.8" cy="5.2" rx="1.5" ry="1.7" fill="none" stroke="#3c3c3c" stroke-width="0.9"/></svg>
<div class="a t" style="left:482.6px;top:92.6px;height:38px;line-height:38px;font-size:20px;color:#161616;transform:scaleX(0.83);transform-origin:0 50%">PLC_1</div>
<svg class="a" style="left:576px;top:104px" width="9.5" height="9.5" viewBox="0 0 10 10" ><path d="M0.6 0.6 L9.4 9.4 M9.4 0.6 L0.6 9.4" stroke="#222" stroke-width="1.3"/></svg>
<div class="a" style="left:428px;top:131px;width:1701px;height:572px;background:#b2b2b2"></div>
<div class="a" style="left:428px;top:131px;width:1701px;height:43.5px;background:#a5a9b3;box-shadow:0 3px 7px rgba(0,0,0,0.16)"></div>
<div class="a" style="left:445px;top:133.5px;width:37.5px;height:37.5px;background:#8b98b2;border-radius:5px;box-shadow:inset 0 0 0 1px #95a1b8"></div>
<svg class="a" style="left:451px;top:139px" width="27.5" height="27.5" viewBox="0 0 27.5 27.5" ><path d="M0.5 3 a2.5 2.5 0 0 1 2.5 -2.5 H13.2 a3 3 0 0 1 2.1 0.9 L26.4 12.5 a2.6 2.6 0 0 1 0 3.7 L16.2 26.4 a2.6 2.6 0 0 1 -3.7 0 L1.4 15.3 a3 3 0 0 1 -0.9 -2.1 Z" fill="#0646a8"/><circle cx="9.2" cy="9.6" r="3.4" fill="#b7c0d2"/></svg>
<svg class="a" style="left:509px;top:139px" width="24" height="28" viewBox="0 0 24 28" ><path d="M6.2 16 V6 a1.5 1.5 0 0 1 3 0 V13 M9.2 12.5 V2.6 a1.5 1.5 0 0 1 3 0 V12.5 M12.2 12.5 V3.6 a1.5 1.5 0 0 1 3 0 V13 M15.2 13 V6.6 a1.5 1.5 0 0 1 3 0 V16.5 L20.2 13.6 a1.6 1.6 0 0 1 2.8 1.4 C21.4 21.5 19 27 12.5 27 C7 27 4.6 23.6 1.2 17.6 a1.5 1.5 0 0 1 2.4 -1.7 L6.2 18.8" fill="none" stroke="#0343a1" stroke-width="1.3" stroke-linejoin="round" stroke-linecap="round"/></svg>
<svg class="a" style="left:564.5px;top:139px" width="26" height="27.5" viewBox="0 0 26 27.5" ><rect x="0" y="0" width="4.6" height="27" rx="0.8" fill="#0343a1"/><rect x="7.2" y="11.5" width="4.4" height="15.5" fill="none" stroke="#0343a1" stroke-width="1.2"/><rect x="13.4" y="10.5" width="5" height="16.5" fill="#0343a1"/><rect x="20.6" y="10.5" width="5" height="16.5" fill="#0343a1"/><path d="M25.5 6.6 H13.6 M17.6 3 L13.4 6.6 L17.6 10" fill="none" stroke="#0343a1" stroke-width="1.3"/></svg>
<div class="a" style="left:613.5px;top:143px;width:1.3px;height:19px;background:#8a95a8"></div>
<svg class="a" style="left:640.5px;top:140.5px" width="23.5" height="23.5" viewBox="0 0 23.5 23.5" ><rect x="0" y="0" width="23.5" height="23.5" fill="#0343a1"/><rect x="0.5" y="0.5" width="22.5" height="22.5" fill="none" stroke="#27317a" stroke-width="1" stroke-dasharray="3 2.2"/><path d="M11.75 3.5 V20 M8.6 6.6 L11.75 3.2 L14.9 6.6 M8.6 16.9 L11.75 20.3 L14.9 16.9" fill="none" stroke="#b7c2d6" stroke-width="1.2"/></svg>
<svg class="a" style="left:690px;top:140.5px" width="23.5" height="23.5" viewBox="0 0 23.5 23.5" ><rect x="0" y="0" width="23.5" height="23.5" fill="#0343a1"/><rect x="0.5" y="0.5" width="22.5" height="22.5" fill="none" stroke="#27317a" stroke-width="1" stroke-dasharray="3 2.2"/><path d="M3 11.75 H20.5 M6.2 8.6 L2.8 11.75 L6.2 14.9 M17.3 8.6 L20.7 11.75 L17.3 14.9" fill="none" stroke="#b7c2d6" stroke-width="1.2"/></svg>
<svg class="a" style="left:739.5px;top:140.5px" width="23.5" height="23.5" viewBox="0 0 23.5 23.5" ><rect x="0" y="0" width="23.5" height="23.5" fill="#0343a1"/><rect x="0.5" y="0.5" width="22.5" height="22.5" fill="none" stroke="#27317a" stroke-width="1" stroke-dasharray="3 2.2"/><path d="M3.6 3.6 L9.6 9.6 M19.9 3.6 L13.9 9.6 M3.6 19.9 L9.6 13.9 M19.9 19.9 L13.9 13.9 M3.4 8 V3.4 H8 M15.5 3.4 H20.1 V8 M3.4 15.5 V20.1 H8 M15.5 20.1 H20.1 V15.5" fill="none" stroke="#b7c2d6" stroke-width="1.2"/></svg>
<div class="a" style="left:2110px;top:387px;width:19.5px;height:59px;background:#a6aab6;border-radius:5px 0 0 5px"></div>
<svg class="a" style="left:2113.5px;top:411px" width="13" height="11" viewBox="0 0 13 11" ><path d="M5.6 0.8 L1 5.5 L5.6 10.2 M11.8 0.8 L7.2 5.5 L11.8 10.2" fill="none" stroke="#0343a1" stroke-width="1.4"/></svg>
<div class="a" style="left:2129.4px;top:91px;width:3.6px;height:1815px;background:#8196be"></div>
<svg class="a" style="left:459px;top:240px" width="240" height="370" viewBox="0 0 240 370" ><g transform="translate(125.2 37.9) rotate(-45)"><rect x="-56.5" y="-6.6" width="113" height="13.2" rx="2.6" fill="#a1b1a6" stroke="#3fa557" stroke-width="1"/><text x="-53.4" y="3.4" font-size="9.3" fill="#2d9a48" font-family="Liberation Sans, sans-serif">CPU_1</text></g><rect x="0.5" y="92.6" width="25" height="19.4" fill="#a8a9ac" stroke="#9b9ca2" stroke-width="0.8" stroke-dasharray="2 2"/><rect x="25.4" y="92.6" width="126.4" height="19.4" fill="#9aad9f" stroke="#3fa557" stroke-width="1"/><text x="88.6" y="105.6" font-size="10" fill="#2d9a48" text-anchor="middle" font-family="Liberation Sans, sans-serif">0</text><rect x="152.3" y="92.6" width="24.4" height="19.4" fill="#acacb0" stroke="#9b9ca2" stroke-width="0.8" stroke-dasharray="2 2"/><rect x="176.7" y="92.6" width="24.6" height="19.4" fill="#acacb0" stroke="#9b9ca2" stroke-width="0.8" stroke-dasharray="2 2"/><rect x="201.6" y="92.6" width="24.2" height="19.4" fill="#777c8d" stroke="#8a8ea0" stroke-width="0.8" stroke-dasharray="2 2"/><text x="164.5" y="105.4" font-size="10" fill="#222" text-anchor="middle" font-family="Liberation Sans, sans-serif">1</text><text x="189" y="105.4" font-size="10" fill="#222" text-anchor="middle" font-family="Liberation Sans, sans-serif">2</text><text x="213.8" y="104" font-size="9" fill="#222" text-anchor="middle" font-family="Liberation Sans, sans-serif">...</text><rect x="152" y="112" width="24.6" height="242.4" fill="#9c9ea4"/><rect x="177.2" y="112" width="24" height="242.4" fill="#9c9ea4"/><path d="M152.6 112v242 M176.9 112v242 M201.3 112v242" stroke="#a6a8ac" stroke-width="0.8"/><path d="M153.5 155v18 M176.4 155v18 M177.6 155v18 M200.6 155v18 M153.5 292v18 M176.4 292v18 M177.6 292v18 M200.6 292v18" stroke="#8f9197" stroke-width="1.2"/><rect x="201.6" y="112" width="24.2" height="242.4" fill="#777c8d"/><text x="213.8" y="208" font-size="9.5" fill="#161616" text-anchor="middle" font-family="Liberation Sans, sans-serif">3</text><text x="213.8" y="227.5" font-size="9.5" fill="#161616" text-anchor="middle" font-family="Liberation Sans, sans-serif">-</text><text x="213.8" y="246" font-size="9.5" fill="#161616" text-anchor="middle" font-family="Liberation Sans, sans-serif">32</text><g transform="translate(21 105) scale(0.080386)"><rect x="58" y="88" width="1287" height="3019" fill="#2b3f45"/><polygon points="75,120 360,120 200,300 75,300" fill="#21343a"/><polygon points="75,300 210,300 210,862 75,740" fill="#3a4c50"/><polygon points="75,740 430,1130 405,1180 405,3107 75,3107" fill="#1a2829"/><polygon points="210,560 360,710 405,735 525,860 370,1025 210,862" fill="#21343a"/><polygon points="525,860 705,860 432,1130 370,1025" fill="#15262b"/><polygon points="360,150 1320,150 1320,742 845,742 705,860 525,860 405,735 360,710 210,560 210,300" fill="#2b3f45"/><path d="M362 162 H1262 a28 28 0 0 1 28 28 V672 a28 28 0 0 1 -28 28 H368 L218 552 V306 Z" fill="#232a22"/><rect x="485" y="290" width="575" height="305" fill="#16272a"/><path d="M485 292 H1060 M485 593 H1060" stroke="#3b4b4c" stroke-width="5"/><rect x="300" y="300" width="50" height="7" fill="#4a4a26"/><rect x="362" y="288" width="62" height="26" fill="#3e4a44" opacity="0.8"/><rect x="300" y="437" width="50" height="7" fill="#4a4a26"/><rect x="362" y="425" width="62" height="26" fill="#3e4a44" opacity="0.8"/><rect x="300" y="575" width="50" height="7" fill="#4a4a26"/><rect x="362" y="563" width="62" height="26" fill="#3e4a44" opacity="0.8"/><rect x="1155" y="255" width="50" height="7" fill="#4a4a26"/><rect x="1217" y="243" width="62" height="26" fill="#3e4a44" opacity="0.8"/><rect x="1155" y="380" width="50" height="7" fill="#4a4a26"/><rect x="1217" y="368" width="62" height="26" fill="#3e4a44" opacity="0.8"/><rect x="1155" y="505" width="50" height="7" fill="#4a4a26"/><rect x="1217" y="493" width="62" height="26" fill="#3e4a44" opacity="0.8"/><rect x="1155" y="628" width="50" height="7" fill="#4a4a26"/><rect x="1217" y="616" width="62" height="26" fill="#3e4a44" opacity="0.8"/><polygon points="405,735 825,735 705,860 525,860" fill="#0d9e74"/><polygon points="845,745 1320,745 1320,3107 410,3107 410,1182" fill="#21343a"/><path d="M410 3107 V1182 L845 745 H1320" fill="none" stroke="#3d5057" stroke-width="9"/><g fill="#b9c7c0"><polygon points="850,1100 960,1100 975,1130 865,1130"/><polygon points="820,1155 990,1155 975,1185 835,1185"/><polygon points="880,1185 930,1185 915,1218 865,1218"/><polygon points="940,1190 975,1190 990,1218 955,1218"/><polygon points="1035,1100 1065,1100 1080,1125 1050,1125"/><polygon points="1020,1140 1075,1140 1045,1218 990,1218"/><polygon points="1075,1100 1140,1100 1150,1130 1085,1130"/><polygon points="1085,1145 1165,1145 1160,1170 1080,1170"/><polygon points="1075,1185 1155,1185 1150,1218 1070,1218"/></g><polygon points="125,1350 235,1245 235,1300 125,1410" fill="#0d9e74"/><circle cx="145" cy="1447" r="14" fill="none" stroke="#8fa09c" stroke-width="6"/><rect x="190" y="1438" width="85" height="16" fill="#5a6e6c" opacity="0.7"/><circle cx="145" cy="1485" r="14" fill="none" stroke="#8fa09c" stroke-width="6"/><rect x="190" y="1476" width="40" height="16" fill="#5a6e6c" opacity="0.7"/><circle cx="145" cy="1523" r="14" fill="none" stroke="#8fa09c" stroke-width="6"/><rect x="190" y="1514" width="105" height="16" fill="#5a6e6c" opacity="0.7"/><circle cx="145" cy="1561" r="14" fill="none" stroke="#8fa09c" stroke-width="6"/><rect x="190" y="1552" width="70" height="16" fill="#5a6e6c" opacity="0.7"/><circle cx="145" cy="1599" r="14" fill="none" stroke="#8fa09c" stroke-width="6"/><rect x="190" y="1590" width="95" height="16" fill="#5a6e6c" opacity="0.7"/><circle cx="145" cy="1637" r="14" fill="none" stroke="#8fa09c" stroke-width="6"/><rect x="190" y="1628" width="35" height="16" fill="#5a6e6c" opacity="0.7"/><rect x="105" y="1712" width="215" height="560" fill="#1c2a22"/><rect x="105" y="2387" width="215" height="215" fill="#1c2a22"/><rect x="235" y="1742" width="72" height="70" rx="8" fill="#0f1a12"/><rect x="145" y="1742" width="72" height="70" fill="#18261c"/><circle cx="180" cy="1777" r="11" fill="#0c140e"/><rect x="235" y="1827" width="72" height="70" rx="8" fill="#0f1a12"/><rect x="145" y="1827" width="72" height="70" fill="#18261c"/><circle cx="180" cy="1862" r="11" fill="#0c140e"/><rect x="235" y="1917" width="72" height="70" rx="8" fill="#0f1a12"/><rect x="145" y="1917" width="72" height="70" fill="#18261c"/><circle cx="180" cy="1952" r="11" fill="#0c140e"/><rect x="235" y="2007" width="72" height="70" rx="8" fill="#0f1a12"/><rect x="145" y="2007" width="72" height="70" fill="#18261c"/><circle cx="180" cy="2042" r="11" fill="#0c140e"/><rect x="235" y="2097" width="72" height="70" rx="8" fill="#0f1a12"/><rect x="145" y="2097" width="72" height="70" fill="#18261c"/><circle cx="180" cy="2132" r="11" fill="#0c140e"/><rect x="235" y="2182" width="72" height="70" rx="8" fill="#0f1a12"/><rect x="145" y="2182" width="72" height="70" fill="#18261c"/><circle cx="180" cy="2217" r="11" fill="#0c140e"/><rect x="235" y="2417" width="72" height="70" rx="8" fill="#0f1a12"/><rect x="145" y="2417" width="72" height="70" fill="#18261c"/><circle cx="180" cy="2452" r="11" fill="#0c140e"/><rect x="235" y="2507" width="72" height="70" rx="8" fill="#0f1a12"/><rect x="145" y="2507" width="72" height="70" fill="#18261c"/><circle cx="180" cy="2542" r="11" fill="#0c140e"/><circle cx="145" cy="2709" r="13" fill="none" stroke="#8fa09c" stroke-width="6"/><circle cx="145" cy="2747" r="13" fill="none" stroke="#8fa09c" stroke-width="6"/><rect x="188" y="2699" width="80" height="14" fill="#5a6e6c" opacity="0.7"/><rect x="188" y="2739" width="40" height="14" fill="#5a6e6c" opacity="0.7"/><polygon points="125,2797 235,2892 235,2952 125,2857" fill="#0d9e74"/><polygon points="75,2887 290,3107 75,3107" fill="#14262d"/><rect x="595" y="2237" width="222" height="222" fill="#3a4c50" stroke="#15713a" stroke-width="11"/><path d="M660 2267 H785 V2427 H660 V2392 L625 2367 V2327 L660 2302 Z" fill="#243834"/><rect x="710" y="2287" width="50" height="125" fill="#465232"/><text x="468" y="2372" font-size="58" fill="#9fb0ad" font-family="Liberation Sans, sans-serif">GE1</text><rect x="918" y="2237" width="222" height="222" fill="#3a4c50" stroke="#15713a" stroke-width="11"/><path d="M1073 2267 H948 V2427 H1073 V2392 L1108 2367 V2327 L1073 2302 Z" fill="#243834"/><rect x="973" y="2287" width="50" height="125" fill="#465232"/><text x="1158" y="2372" font-size="58" fill="#9fb0ad" font-family="Liberation Sans, sans-serif">GE2</text><rect x="595" y="2562" width="222" height="222" fill="#3a4c50" stroke="#15713a" stroke-width="11"/><path d="M660 2592 H785 V2752 H660 V2717 L625 2692 V2652 L660 2627 Z" fill="#243834"/><rect x="710" y="2612" width="50" height="125" fill="#465232"/><text x="508" y="2697" font-size="58" fill="#9fb0ad" font-family="Liberation Sans, sans-serif">X3</text><rect x="918" y="2562" width="222" height="222" fill="#3a4c50" stroke="#15713a" stroke-width="11"/><path d="M1073 2592 H948 V2752 H1073 V2717 L1108 2692 V2652 L1073 2627 Z" fill="#243834"/><rect x="973" y="2612" width="50" height="125" fill="#465232"/><text x="1158" y="2697" font-size="58" fill="#9fb0ad" font-family="Liberation Sans, sans-serif">P/X</text><text x="468" y="2969" font-size="100" font-weight="bold" font-style="italic" fill="#c4d0cc" font-family="Liberation Sans, sans-serif">T3</text><rect x="1345" y="88" width="277" height="2934" fill="#98a79f"/><rect x="1385" y="165" width="200" height="205" fill="#101c14" stroke="#5e726a" stroke-width="9"/><polygon points="1382,162 1588,162 1560,198 1382,198" fill="#0d9e74"/><rect x="1495" y="465" width="62" height="30" fill="#3a3a22"/><rect x="1495" y="553" width="62" height="30" fill="#3a3a22"/><rect x="1395" y="468" width="75" height="22" fill="#7f8f88" opacity="0.7"/><rect x="1405" y="556" width="60" height="22" fill="#7f8f88" opacity="0.7"/><ellipse cx="1423" cy="716.0" rx="23" ry="34" fill="#121c16"/><rect x="1495" y="644.0" width="48" height="17" fill="#3f3a22"/><rect x="1485" y="680.0" width="80" height="76" fill="#1d9a63"/><path d="M1525 692.0 V744.0 M1497 718.0 H1553" stroke="#0f5a38" stroke-width="14"/><circle cx="1525" cy="718.0" r="14" fill="#0b3a26"/><ellipse cx="1423" cy="852.2" rx="23" ry="34" fill="#121c16"/><rect x="1495" y="780.2" width="48" height="17" fill="#3f3a22"/><rect x="1485" y="816.2" width="80" height="76" fill="#1d9a63"/><path d="M1525 828.2 V880.2 M1497 854.2 H1553" stroke="#0f5a38" stroke-width="14"/><circle cx="1525" cy="854.2" r="14" fill="#0b3a26"/><ellipse cx="1423" cy="988.4" rx="23" ry="34" fill="#121c16"/><rect x="1495" y="916.4" width="48" height="17" fill="#3f3a22"/><rect x="1485" y="952.4" width="80" height="76" fill="#1d9a63"/><path d="M1525 964.4 V1016.4 M1497 990.4 H1553" stroke="#0f5a38" stroke-width="14"/><circle cx="1525" cy="990.4" r="14" fill="#0b3a26"/><ellipse cx="1423" cy="1124.6" rx="23" ry="34" fill="#121c16"/><rect x="1495" y="1052.6" width="48" height="17" fill="#3f3a22"/><rect x="1485" y="1088.6" width="80" height="76" fill="#1d9a63"/><path d="M1525 1100.6 V1152.6 M1497 1126.6 H1553" stroke="#0f5a38" stroke-width="14"/><circle cx="1525" cy="1126.6" r="14" fill="#0b3a26"/><ellipse cx="1423" cy="1260.8" rx="23" ry="34" fill="#121c16"/><rect x="1495" y="1188.8" width="48" height="17" fill="#3f3a22"/><rect x="1485" y="1224.8" width="80" height="76" fill="#1d9a63"/><path d="M1525 1236.8 V1288.8 M1497 1262.8 H1553" stroke="#0f5a38" stroke-width="14"/><circle cx="1525" cy="1262.8" r="14" fill="#0b3a26"/><ellipse cx="1423" cy="1397.0" rx="23" ry="34" fill="#121c16"/><rect x="1495" y="1325.0" width="48" height="17" fill="#3f3a22"/><rect x="1485" y="1361.0" width="80" height="76" fill="#1d9a63"/><path d="M1525 1373.0 V1425.0 M1497 1399.0 H1553" stroke="#0f5a38" stroke-width="14"/><circle cx="1525" cy="1399.0" r="14" fill="#0b3a26"/><ellipse cx="1423" cy="1533.2" rx="23" ry="34" fill="#121c16"/><rect x="1495" y="1461.2" width="48" height="17" fill="#3f3a22"/><rect x="1485" y="1497.2" width="80" height="76" fill="#1d9a63"/><path d="M1525 1509.2 V1561.2 M1497 1535.2 H1553" stroke="#0f5a38" stroke-width="14"/><circle cx="1525" cy="1535.2" r="14" fill="#0b3a26"/><ellipse cx="1423" cy="1669.4" rx="23" ry="34" fill="#121c16"/><rect x="1495" y="1597.4" width="48" height="17" fill="#3f3a22"/><rect x="1485" y="1633.4" width="80" height="76" fill="#1d9a63"/><path d="M1525 1645.4 V1697.4 M1497 1671.4 H1553" stroke="#0f5a38" stroke-width="14"/><circle cx="1525" cy="1671.4" r="14" fill="#0b3a26"/><ellipse cx="1423" cy="1805.6" rx="23" ry="34" fill="#121c16"/><rect x="1495" y="1733.6" width="48" height="17" fill="#3f3a22"/><rect x="1485" y="1769.6" width="80" height="76" fill="#1d9a63"/><path d="M1525 1781.6 V1833.6 M1497 1807.6 H1553" stroke="#0f5a38" stroke-width="14"/><circle cx="1525" cy="1807.6" r="14" fill="#0b3a26"/><ellipse cx="1423" cy="1941.8" rx="23" ry="34" fill="#121c16"/><rect x="1495" y="1869.8" width="48" height="17" fill="#3f3a22"/><rect x="1485" y="1905.8" width="80" height="76" fill="#1d9a63"/><path d="M1525 1917.8 V1969.8 M1497 1943.8 H1553" stroke="#0f5a38" stroke-width="14"/><circle cx="1525" cy="1943.8" r="14" fill="#0b3a26"/><ellipse cx="1423" cy="2078.0" rx="23" ry="34" fill="#121c16"/><rect x="1495" y="2006.0" width="48" height="17" fill="#3f3a22"/><rect x="1485" y="2042.0" width="80" height="76" fill="#1d9a63"/><path d="M1525 2054.0 V2106.0 M1497 2080.0 H1553" stroke="#0f5a38" stroke-width="14"/><circle cx="1525" cy="2080.0" r="14" fill="#0b3a26"/><ellipse cx="1423" cy="2214.2" rx="23" ry="34" fill="#121c16"/><rect x="1495" y="2142.2" width="48" height="17" fill="#3f3a22"/><rect x="1485" y="2178.2" width="80" height="76" fill="#1d9a63"/><path d="M1525 2190.2 V2242.2 M1497 2216.2 H1553" stroke="#0f5a38" stroke-width="14"/><circle cx="1525" cy="2216.2" r="14" fill="#0b3a26"/><ellipse cx="1423" cy="2350.4" rx="23" ry="34" fill="#121c16"/><rect x="1495" y="2278.4" width="48" height="17" fill="#3f3a22"/><rect x="1485" y="2314.4" width="80" height="76" fill="#1d9a63"/><path d="M1525 2326.4 V2378.4 M1497 2352.4 H1553" stroke="#0f5a38" stroke-width="14"/><circle cx="1525" cy="2352.4" r="14" fill="#0b3a26"/><ellipse cx="1423" cy="2486.6" rx="23" ry="34" fill="#121c16"/><rect x="1495" y="2414.6" width="48" height="17" fill="#3f3a22"/><rect x="1485" y="2450.6" width="80" height="76" fill="#1d9a63"/><path d="M1525 2462.6 V2514.6 M1497 2488.6 H1553" stroke="#0f5a38" stroke-width="14"/><circle cx="1525" cy="2488.6" r="14" fill="#0b3a26"/><ellipse cx="1423" cy="2622.8" rx="23" ry="34" fill="#121c16"/><rect x="1495" y="2550.8" width="48" height="17" fill="#3f3a22"/><rect x="1485" y="2586.8" width="80" height="76" fill="#1d9a63"/><path d="M1525 2598.8 V2650.8 M1497 2624.8 H1553" stroke="#0f5a38" stroke-width="14"/><circle cx="1525" cy="2624.8" r="14" fill="#0b3a26"/><ellipse cx="1423" cy="2759.0" rx="23" ry="34" fill="#121c16"/><rect x="1495" y="2687.0" width="48" height="17" fill="#3f3a22"/><rect x="1485" y="2723.0" width="80" height="76" fill="#1d9a63"/><path d="M1525 2735.0 V2787.0 M1497 2761.0 H1553" stroke="#0f5a38" stroke-width="14"/><circle cx="1525" cy="2761.0" r="14" fill="#0b3a26"/><rect x="1360" y="3027" width="262" height="78" fill="#10201a"/><polygon points="400,3112 1330,3112 1330,3232 520,3232" fill="#252b3a"/><path d="M1280 2972 V3177 H1070" fill="none" stroke="#18a57c" stroke-width="30"/></g><rect x="25.4" y="112" width="126.4" height="242.6" fill="none" stroke="#17803a" stroke-width="1"/></svg>
<div class="a" style="left:428px;top:703px;width:1701px;height:1203px;background:#aeafb3"></div>
<div class="a" style="left:428px;top:705px;width:1701px;height:39px;background:#9ba5b5"></div>
<div class="a" style="left:426px;top:702.2px;width:1703px;height:5px;background:linear-gradient(#96a9cd,#6588c8 42%,#96a9cd)"></div>
<div class="a" style="left:538px;top:705px;width:111px;height:39px;background:#b0b1b5"></div>
<div class="a" style="left:538px;top:704.2px;width:111px;height:3.2px;background:#1b55c0"></div>
<svg class="a" style="left:449px;top:713.8px" width="20" height="20" viewBox="0 0 20 20" ><circle cx="10" cy="10" r="9" fill="none" stroke="#62666d" stroke-width="1.5"/><text x="10" y="15" font-size="14" font-style="italic" font-weight="bold" font-family="Liberation Serif, serif" text-anchor="middle" fill="#62666d">i</text></svg>
<div class="a t" style="left:477.6px;top:707.2px;height:38px;line-height:38px;font-size:20.4px;color:#62666d">信息</div>
<svg class="a" style="left:560px;top:715px" width="20" height="19" viewBox="0 0 20 19" ><rect x="0" y="0" width="20" height="19" rx="3" fill="#0b49b3"/><rect x="0" y="16.6" width="20" height="2.4" rx="1.2" fill="#27317a"/><path d="M3.4 4.6h13.4" stroke="#b7c2d6" stroke-width="1.6"/><rect x="3.6" y="8.6" width="5.6" height="5" fill="#27317a" stroke="#b7c2d6" stroke-width="1.2"/><path d="M11.4 9.4h5.4M11.4 12.8h5.4" stroke="#b7c2d6" stroke-width="1.4"/></svg>
<div class="a t" style="left:589.6px;top:707.2px;height:38px;line-height:38px;font-size:20.4px;color:#2a5fc8">属性</div>
<svg class="a" style="left:672px;top:714px" width="20.5" height="20.5" viewBox="0 0 20.5 20.5" ><path d="M4.6 4.4 V1.6 a0.9 0.9 0 0 1 0.9 -0.9 H18.8 a0.9 0.9 0 0 1 0.9 0.9 V14.6 a0.9 0.9 0 0 1 -0.9 0.9 H16.4" fill="none" stroke="#7a7f88" stroke-width="1.3"/><rect x="0.7" y="4.6" width="15.4" height="15.2" rx="0.9" fill="none" stroke="#7a7f88" stroke-width="1.3"/><path d="M8.4 7.6v6.4M8.4 15.6v1.8" stroke="#6a4a3a" stroke-width="1.7"/></svg>
<div class="a t" style="left:702px;top:707.2px;height:38px;line-height:38px;font-size:20.2px;color:#4a4d52">IO冲突表</div>
<div class="a t" style="left:1891px;top:706.5px;height:38px;line-height:38px;font-size:20px;color:#161616;transform:scaleX(0.905);transform-origin:0 50%">CPU_1</div>
<div class="a" style="left:428px;top:744.5px;width:330px;height:1142.5px;overflow:hidden"><div class="a" style="left:5px;top:17.5px;width:308px;height:35px;background:#a5abb8;border-radius:5px"></div><svg class="a" style="left:16.4px;top:31.0px" width="16" height="9" viewBox="0 0 16 9" ><path d="M0.8 0.8 L8.0 8 L15.2 0.8" fill="none" stroke="#1a51ba" stroke-width="1.6"/></svg><div class="a t" style="left:42.6px;top:19.5px;height:35px;line-height:35px;color:#1a51ba;transform:scaleX(0.905);transform-origin:0 50%">CPU_1</div><div class="a" style="left:5px;top:54.5px;width:308px;height:35px;background:#a8a9ad;border-radius:5px"></div><svg class="a" style="left:29.7px;top:68.0px" width="16" height="9" viewBox="0 0 16 9" ><path d="M0.8 0.8 L8.0 8 L15.2 0.8" fill="none" stroke="#1a51ba" stroke-width="1.6"/></svg><div class="a t" style="left:55.7px;top:56.5px;height:35px;line-height:35px;color:#1a51ba">常规</div><div class="a" style="left:5px;top:91.5px;width:308px;height:35px;background:#b3b3b4;border-radius:5px;border-bottom:1.4px solid #a2a3a6"></div><div class="a t" style="left:69.6px;top:93.5px;height:35px;line-height:35px;color:#141414">项目信息</div><div class="a" style="left:5px;top:128.5px;width:308px;height:35px;background:#b3b3b4;border-radius:5px;border-bottom:1.4px solid #a2a3a6"></div><div class="a t" style="left:69.6px;top:130.5px;height:35px;line-height:35px;color:#141414">设备信息</div><div class="a" style="left:5px;top:165.5px;width:308px;height:35px;background:#a8a9ad;border-radius:5px"></div><svg class="a" style="left:29.7px;top:179.0px" width="16" height="9" viewBox="0 0 16 9" ><path d="M0.8 0.8 L8.0 8 L15.2 0.8" fill="none" stroke="#1a51ba" stroke-width="1.6"/></svg><div class="a t" style="left:55.7px;top:167.5px;height:35px;line-height:35px;color:#1a51ba">CPUCore</div><div class="a" style="left:5px;top:202.5px;width:308px;height:35px;background:#b3b3b4;border-radius:5px;border-bottom:1.4px solid #a2a3a6"></div><div class="a t" style="left:69.6px;top:204.5px;height:35px;line-height:35px;color:#141414">常规属性</div><div class="a" style="left:5px;top:239.5px;width:308px;height:35px;background:#b3b3b4;border-radius:5px;border-bottom:1.4px solid #a2a3a6"></div><div class="a t" style="left:69.6px;top:241.5px;height:35px;line-height:35px;color:#141414">时间同步</div><div class="a" style="left:5px;top:276.5px;width:308px;height:35px;background:#b3b3b4;border-radius:5px;border-bottom:1.4px solid #a2a3a6"></div><div class="a t" style="left:69.6px;top:278.5px;height:35px;line-height:35px;color:#141414">时区设置</div><div class="a" style="left:5px;top:313.5px;width:308px;height:35px;background:#b3b3b4;border-radius:5px;border-bottom:1.4px solid #a2a3a6"></div><div class="a t" style="left:69.6px;top:315.5px;height:35px;line-height:35px;color:#141414">启动</div><div class="a" style="left:5px;top:350.5px;width:308px;height:35px;background:#b3b3b4;border-radius:5px;border-bottom:1.4px solid #a2a3a6"></div><div class="a t" style="left:69.6px;top:352.5px;height:35px;line-height:35px;color:#141414">主站任务</div><div class="a" style="left:5px;top:387.5px;width:308px;height:35px;background:#a8a9ad;border-radius:5px"></div><svg class="a" style="left:29.7px;top:401.0px" width="16" height="9" viewBox="0 0 16 9" ><path d="M0.8 0.8 L8.0 8 L15.2 0.8" fill="none" stroke="#1a51ba" stroke-width="1.6"/></svg><div class="a t" style="left:55.7px;top:389.5px;height:35px;line-height:35px;color:#1a51ba;transform:scaleX(0.89);transform-origin:0 50%">GE1</div><div class="a" style="left:5px;top:424.5px;width:308px;height:35px;background:#b3b3b4;border-radius:5px;border-bottom:1.4px solid #a2a3a6"></div><div class="a t" style="left:69.6px;top:426.5px;height:35px;line-height:35px;color:#141414">常规属性</div><div class="a" style="left:5px;top:461.5px;width:308px;height:35px;background:#b3b3b4;border-radius:5px;border-bottom:1.4px solid #a2a3a6"></div><div class="a t" style="left:69.6px;top:463.5px;height:35px;line-height:35px;color:#141414">以太网协议标准</div><div class="a" style="left:5px;top:498.5px;width:308px;height:35px;background:#b3b3b4;border-radius:5px;border-bottom:1.4px solid #a2a3a6"></div><div class="a t" style="left:69.6px;top:500.5px;height:35px;line-height:35px;color:#141414">以太网地址</div><div class="a" style="left:5px;top:535.5px;width:308px;height:35px;background:#b3b3b4;border-radius:5px;border-bottom:1.4px solid #a2a3a6"></div><svg class="a" style="left:43.0px;top:549.0px" width="16" height="9" viewBox="0 0 16 9" ><path d="M0.8 0.8 L8.0 8 L15.2 0.8" fill="none" stroke="#1a51ba" stroke-width="1.6"/></svg><div class="a t" style="left:69.6px;top:537.5px;height:35px;line-height:35px;color:#1a51ba">端口1</div><div class="a" style="left:5px;top:572.5px;width:308px;height:35px;background:#b3b3b4;border-radius:5px;border-bottom:1.4px solid #a2a3a6"></div><div class="a t" style="left:83px;top:574.5px;height:35px;line-height:35px;color:#141414">常规属性</div><div class="a" style="left:5px;top:609.5px;width:308px;height:35px;background:#a8a9ad;border-radius:5px"></div><svg class="a" style="left:29.7px;top:623.0px" width="16" height="9" viewBox="0 0 16 9" ><path d="M0.8 0.8 L8.0 8 L15.2 0.8" fill="none" stroke="#1a51ba" stroke-width="1.6"/></svg><div class="a t" style="left:55.7px;top:611.5px;height:35px;line-height:35px;color:#1a51ba;transform:scaleX(0.89);transform-origin:0 50%">GE2</div><div class="a" style="left:5px;top:646.5px;width:308px;height:35px;background:#b3b3b4;border-radius:5px;border-bottom:1.4px solid #a2a3a6"></div><div class="a t" style="left:69.6px;top:648.5px;height:35px;line-height:35px;color:#141414">常规属性</div><div class="a" style="left:5px;top:683.5px;width:308px;height:35px;background:#b3b3b4;border-radius:5px;border-bottom:1.4px solid #a2a3a6"></div><div class="a t" style="left:69.6px;top:685.5px;height:35px;line-height:35px;color:#141414">以太网协议标准</div><div class="a" style="left:5px;top:720.5px;width:308px;height:35px;background:#b3b3b4;border-radius:5px;border-bottom:1.4px solid #a2a3a6"></div><div class="a t" style="left:69.6px;top:722.5px;height:35px;line-height:35px;color:#141414">以太网地址</div><div class="a" style="left:5px;top:757.5px;width:308px;height:35px;background:#b3b3b4;border-radius:5px;border-bottom:1.4px solid #a2a3a6"></div><svg class="a" style="left:43.0px;top:771.0px" width="16" height="9" viewBox="0 0 16 9" ><path d="M0.8 0.8 L8.0 8 L15.2 0.8" fill="none" stroke="#1a51ba" stroke-width="1.6"/></svg><div class="a t" style="left:69.6px;top:759.5px;height:35px;line-height:35px;color:#1a51ba">端口1</div><div class="a" style="left:5px;top:794.5px;width:308px;height:35px;background:#b3b3b4;border-radius:5px;border-bottom:1.4px solid #a2a3a6"></div><div class="a t" style="left:83px;top:796.5px;height:35px;line-height:35px;color:#141414">常规属性</div><div class="a" style="left:5px;top:831.5px;width:308px;height:35px;background:#a8a9ad;border-radius:5px"></div><svg class="a" style="left:29.7px;top:845.0px" width="16" height="9" viewBox="0 0 16 9" ><path d="M0.8 0.8 L8.0 8 L15.2 0.8" fill="none" stroke="#1a51ba" stroke-width="1.6"/></svg><div class="a t" style="left:55.7px;top:833.5px;height:35px;line-height:35px;color:#1a51ba">X3</div><div class="a" style="left:5px;top:868.5px;width:308px;height:35px;background:#b3b3b4;border-radius:5px;border-bottom:1.4px solid #a2a3a6"></div><div class="a t" style="left:69.6px;top:870.5px;height:35px;line-height:35px;color:#141414">常规属性</div><div class="a" style="left:5px;top:905.5px;width:308px;height:35px;background:#b3b3b4;border-radius:5px;border-bottom:1.4px solid #a2a3a6"></div><div class="a t" style="left:69.6px;top:907.5px;height:35px;line-height:35px;color:#141414">以太网协议标准</div><div class="a" style="left:5px;top:942.5px;width:308px;height:35px;background:#b3b3b4;border-radius:5px;border-bottom:1.4px solid #a2a3a6"></div><div class="a t" style="left:69.6px;top:944.5px;height:35px;line-height:35px;color:#141414">以太网地址</div><div class="a" style="left:5px;top:979.5px;width:308px;height:35px;background:#b3b3b4;border-radius:5px;border-bottom:1.4px solid #a2a3a6"></div><svg class="a" style="left:43.0px;top:993.0px" width="16" height="9" viewBox="0 0 16 9" ><path d="M0.8 0.8 L8.0 8 L15.2 0.8" fill="none" stroke="#1a51ba" stroke-width="1.6"/></svg><div class="a t" style="left:69.6px;top:981.5px;height:35px;line-height:35px;color:#1a51ba">端口1</div><div class="a" style="left:5px;top:1016.5px;width:308px;height:35px;background:#b3b3b4;border-radius:5px;border-bottom:1.4px solid #a2a3a6"></div><div class="a t" style="left:83px;top:1018.5px;height:35px;line-height:35px;color:#141414">常规属性</div><div class="a" style="left:5px;top:1053.5px;width:308px;height:35px;background:#a8a9ad;border-radius:5px"></div><svg class="a" style="left:29.7px;top:1067.0px" width="16" height="9" viewBox="0 0 16 9" ><path d="M0.8 0.8 L8.0 8 L15.2 0.8" fill="none" stroke="#1a51ba" stroke-width="1.6"/></svg><div class="a t" style="left:55.7px;top:1055.5px;height:35px;line-height:35px;color:#1a51ba">P/X</div><div class="a" style="left:5px;top:1090.5px;width:308px;height:35px;background:#b3b3b4;border-radius:5px;border-bottom:1.4px solid #a2a3a6"></div><div class="a t" style="left:69.6px;top:1092.5px;height:35px;line-height:35px;color:#141414">常规属性</div><div class="a" style="left:5px;top:1127.5px;width:308px;height:35px;background:#b3b3b4;border-radius:5px;border-bottom:1.4px solid #a2a3a6"></div><div class="a t" style="left:69.6px;top:1129.5px;height:35px;line-height:35px;color:#141414">以太网协议标准</div></div>
<div class="a" style="left:746.5px;top:759.5px;width:9px;height:378px;background:#a0a2a4;border-radius:4.5px"></div>
<div class="a" style="left:757px;top:759.5px;width:1.8px;height:1128px;background:#a3a3a4"></div>
<div class="a" style="left:765px;top:744.5px;width:1364px;height:1143.5px;overflow:hidden"><div class="a t" style="left:31.2px;top:21.1px;height:30px;line-height:30px;font-size:18.2px;color:#2a2a2a">接口名称</div><div class="a t" style="left:31.2px;top:66.3px;height:30px;line-height:30px;font-size:18.2px;color:#2a2a2a">接口注释</div><div class="a t" style="left:31.2px;top:154.5px;height:30px;line-height:30px;font-size:18.2px;color:#2a2a2a">硬件标识符</div><div class="a t" style="left:31.2px;top:281.5px;height:30px;line-height:30px;font-size:18.2px;color:#2a2a2a">以太网地址</div><svg class="a" style="left:40.5px;top:228.0px" width="8.5" height="11" viewBox="0 0 8.5 11" ><path d="M0.8 0.8 L7.5 5.5 L0.8 10.2" fill="none" stroke="#6a6a6a" stroke-width="1.3"/></svg><div class="a t" style="left:64px;top:218.5px;height:30px;line-height:30px;font-size:18.2px;color:#2a5fc8">常规属性</div><svg class="a" style="left:40.5px;top:354.6px" width="8.5" height="11" viewBox="0 0 8.5 11" ><path d="M0.8 0.8 L7.5 5.5 L0.8 10.2" fill="none" stroke="#6a6a6a" stroke-width="1.3"/></svg><div class="a t" style="left:64px;top:345.1px;height:30px;line-height:30px;font-size:18.2px;color:#2a5fc8">IP协议</div><svg class="a" style="left:40.5px;top:661.0px" width="8.5" height="11" viewBox="0 0 8.5 11" ><path d="M0.8 0.8 L7.5 5.5 L0.8 10.2" fill="none" stroke="#6a6a6a" stroke-width="1.3"/></svg><div class="a t" style="left:64px;top:651.5px;height:30px;line-height:30px;font-size:18.2px;color:#2a5fc8">常规属性</div><div class="a" style="left:31px;top:256.2px;width:1299px;height:1.3px;background:#6f8fce"></div><div class="a" style="left:31px;top:382.4px;width:1299px;height:1.3px;background:#6f8fce"></div><div class="a" style="left:31px;top:691.5px;width:1299px;height:1.3px;background:#6f8fce"></div><div class="a" style="left:31px;top:771.5px;width:1299px;height:1.3px;background:#6f8fce"></div><div class="a" style="left:31px;top:896.9px;width:1299px;height:1.3px;background:#6f8fce"></div><div class="a" style="left:31px;top:976.9px;width:1299px;height:1.3px;background:#6f8fce"></div><svg class="a" style="left:34px;top:411.5px" width="20" height="20" viewBox="0 0 20 20" ><circle cx="10" cy="10" r="9" fill="none" stroke="#1b55c0" stroke-width="1.4"/><circle cx="10" cy="10" r="5" fill="#1b55c0"/></svg><div class="a t" style="left:44px;top:795.0px;height:30px;line-height:30px;font-size:18.2px;color:#2a2a2a">硬件标识符</div><div class="a t" style="left:252.6px;top:795.0px;height:30px;line-height:30px;font-size:20px;color:#2a2a2a">2814749767106573</div><div class="a t" style="left:31.2px;top:858.5px;height:30px;line-height:30px;font-size:19px;color:#2a5fc8;letter-spacing:0.5px">P/X</div><svg class="a" style="left:40.5px;top:948.6px" width="9.5" height="11" viewBox="0 0 9.5 11" ><path d="M0.8 0.8 L8.5 5.5 L0.8 10.2" fill="none" stroke="#6a6a6a" stroke-width="1.3"/></svg><div class="a t" style="left:63.8px;top:939.1px;height:30px;line-height:30px;font-size:18.2px;color:#2a5fc8">常规属性</div><div class="a t" style="left:31.2px;top:1001.5px;height:30px;line-height:30px;font-size:18.2px;color:#2a2a2a">接口名称</div><div class="a t" style="left:239.3px;top:1001.5px;height:30px;line-height:30px;font-size:20px;color:#2a2a2a">P/X</div><div class="a t" style="left:31.2px;top:1048.1px;height:30px;line-height:30px;font-size:18.2px;color:#2a2a2a">接口注释</div><div class="a" style="left:222.6px;top:1043.8px;width:521px;height:81px;background:#b3b3b3;border:1.2px solid #bdbdbd;border-radius:5px"></div><svg class="a" style="left:726.6px;top:1109.5px" width="13" height="12" viewBox="0 0 13 12" ><path d="M1 11 L12 1 M7.6 11 L12 7" stroke="#333" stroke-width="1.3"/></svg><div class="a t" style="left:36px;top:1135.3px;height:30px;line-height:30px;font-size:18.2px;color:#2a2a2a">硬件标识符</div><div class="a t" style="left:240px;top:1133.1px;height:30px;line-height:30px;font-size:20px;color:#2a2a2a">2814749767106573</div></div>
<div class="a" style="left:2133px;top:91px;width:364px;height:1815px;background:#b0b1b5"></div>
<div class="a" style="left:2133px;top:91px;width:364px;height:40px;background:#9ca6b6"></div>
<div class="a t" style="left:2148px;top:92.5px;height:40px;line-height:40px;font-size:20px;color:#161616">硬件目录</div>
<div class="a" style="left:2133px;top:130.6px;width:364px;height:1.6px;background:#b4b7bb"></div>
<div class="a" style="left:2133px;top:133.3px;width:364px;height:35.6px;background:#99a5b8;border-radius:5px"></div>
<svg class="a" style="left:2143px;top:147px" width="17" height="9.5" viewBox="0 0 17 9.5" ><path d="M0.8 0.8 L8.5 8.5 L16.2 0.8" fill="none" stroke="#1a51ba" stroke-width="1.6"/></svg>
<div class="a t" style="left:2171px;top:135px;height:35px;line-height:35px;font-size:17.6px;color:#1a51ba">目录</div>
<svg class="a" style="left:2148px;top:192px" width="20" height="20" viewBox="0 0 20 20" ><rect width="20" height="20" rx="3.6" fill="#1b55c0"/><path d="M4 10.2 L8.4 14.6 L16.2 5.6" fill="none" stroke="#c3cbd9" stroke-width="1.9"/></svg>
<div class="a t" style="left:2181.5px;top:188.6px;height:30px;line-height:30px;font-size:17.8px;color:#161616">过滤</div>
<div class="a" style="left:2246.4px;top:189.5px;width:1.5px;height:26px;background:#a2a3a7"></div>
<div class="a" style="left:2271.5px;top:181.7px;width:134px;height:41px;background:#b2b2b2;border:1.2px solid #bbbbbc;border-radius:6px"></div>
<div class="a t" style="left:2289px;top:187px;height:30px;line-height:30px;font-size:18px;color:#808082">搜索</div>
<svg class="a" style="left:2426.5px;top:191.5px" width="20" height="19.5" viewBox="0 0 20 19.5" ><path d="M0 1 H20 M0 9.6 H7 M0 18.4 H6" stroke="#9a9b9e" stroke-width="1.9"/><path d="M13.6 5 V16.6 M8.6 11.6 L13.6 16.8 L18.6 11.6" fill="none" stroke="#9a9b9e" stroke-width="1.5"/></svg>
<svg class="a" style="left:2466px;top:191.5px" width="20" height="19.5" viewBox="0 0 20 19.5" ><path d="M0 1 H20 M0 9.6 H6 M0 18.4 H6" stroke="#9a9b9e" stroke-width="1.9"/><path d="M13.2 18.6 V6.4 M8 11.6 L13.2 6 L18.4 11.6" fill="none" stroke="#9a9b9e" stroke-width="1.5"/></svg>
<div class="a" style="left:2140px;top:237px;width:343px;height:42px;background:#a6aab6;border-radius:6px"></div>
<svg class="a" style="left:2152.6px;top:250.5px" width="8" height="14" viewBox="0 0 8 14" ><path d="M0.8 0.8 L7 7.0 L0.8 13.2" fill="none" stroke="#74777d" stroke-width="1.4"/></svg>
<svg class="a" style="left:2178.5px;top:248.4px" width="17.5" height="20.5" viewBox="0 0 17.5 20.5" ><rect x="0.8" y="0.8" width="15.9" height="18.4" rx="1" fill="none" stroke="#7d7f84" stroke-width="1.5"/><rect x="0.8" y="18.6" width="15.9" height="1.6" fill="#7d7f84"/><path d="M6.6 1v18" stroke="#7d7f84" stroke-width="1.3"/><circle cx="3.8" cy="16" r="1" fill="#7d7f84"/><path d="M9.6 4v5" stroke="#7d7f84" stroke-width="1"/><rect x="11.4" y="4" width="3" height="5" fill="none" stroke="#7d7f84" stroke-width="0.9"/><rect x="9" y="11.4" width="1" height="1" fill="#7d7f84"/><rect x="9" y="13.600000000000001" width="1" height="1" fill="#7d7f84"/><rect x="9" y="15.8" width="1" height="1" fill="#7d7f84"/><rect x="11" y="11.4" width="1" height="1" fill="#7d7f84"/><rect x="11" y="13.600000000000001" width="1" height="1" fill="#7d7f84"/><rect x="11" y="15.8" width="1" height="1" fill="#7d7f84"/><rect x="13" y="11.4" width="1" height="1" fill="#7d7f84"/><rect x="13" y="13.600000000000001" width="1" height="1" fill="#7d7f84"/><rect x="13" y="15.8" width="1" height="1" fill="#7d7f84"/></svg>
<div class="a t" style="left:2206.4px;top:238.6px;height:40px;line-height:40px;font-size:20px;color:#161616;transform:scaleX(0.78);transform-origin:0 50%">PLC</div>
<div class="a" style="left:2131px;top:1291.7px;width:362px;height:8px;background:#909090;border-radius:4px"></div>
<div class="a" style="left:2133px;top:1299.6px;width:364px;height:3.4px;background:#8196be"></div>
<div class="a" style="left:2133px;top:1305.5px;width:364px;height:35.4px;background:#99a5b8;border-radius:5px 5px 0 0;box-shadow:inset 0 1px 0 #a3adbd"></div>
<svg class="a" style="left:2143px;top:1318.8px" width="17" height="9.5" viewBox="0 0 17 9.5" ><path d="M0.8 0.8 L8.5 8.5 L16.2 0.8" fill="none" stroke="#1a51ba" stroke-width="1.6"/></svg>
<div class="a t" style="left:2170.4px;top:1307px;height:35px;line-height:35px;font-size:17.6px;color:#1a51ba">信息</div>
<div class="a" style="left:2186px;top:1361px;width:267px;height:267px;background:#a1a2a5;border-radius:5px"></div>
<svg class="a" style="left:2230px;top:1390px" width="178.5" height="208" viewBox="0 0 178.5 208" ><rect x="0" y="0" width="178.5" height="208" rx="12" fill="#858688"/><rect x="69" y="15.4" width="96" height="178" rx="13" fill="#a1a2a5"/><rect x="80" y="25.4" width="13.6" height="66.6" rx="6.8" fill="#858688"/><rect x="113.5" y="25.4" width="37" height="66.6" fill="#858688"/><circle cx="86.7" cy="110.4" r="6.9" fill="#858688"/><circle cx="107" cy="110.4" r="6.9" fill="#858688"/><circle cx="127" cy="110.4" r="6.9" fill="#858688"/><circle cx="147.2" cy="110.4" r="6.9" fill="#858688"/><circle cx="86.7" cy="140.4" r="6.9" fill="#858688"/><circle cx="107" cy="140.4" r="6.9" fill="#858688"/><circle cx="127" cy="140.4" r="6.9" fill="#858688"/><circle cx="147.2" cy="140.4" r="6.9" fill="#858688"/><circle cx="86.7" cy="170.8" r="6.9" fill="#858688"/><circle cx="107" cy="170.8" r="6.9" fill="#858688"/><circle cx="127" cy="170.8" r="6.9" fill="#858688"/><circle cx="147.2" cy="170.8" r="6.9" fill="#858688"/><circle cx="35.6" cy="181.4" r="12.6" fill="#a1a2a5"/></svg>
<div class="a" style="left:2133px;top:1341px;width:364px;height:556.5px;overflow:hidden"><div class="a t" style="left:18.5px;top:317px;height:30px;line-height:30px;font-size:20px;color:#161616">供应商<span style="margin-left:1.5px">:</span></div><div class="a t" style="left:128px;top:316.6px;height:30px;line-height:30px;font-size:20px;color:#161616">-</div><div class="a t" style="left:18.5px;top:360.4px;height:30px;line-height:30px;font-size:20px;color:#161616">类别<span style="margin-left:1.5px">:</span></div><div class="a t" style="left:128px;top:360.0px;height:30px;line-height:30px;font-size:20px;color:#161616">-</div><div class="a t" style="left:18.5px;top:403.4px;height:30px;line-height:30px;font-size:20px;color:#161616">产品型号<span style="margin-left:1.5px">:</span></div><div class="a t" style="left:128px;top:403.0px;height:30px;line-height:30px;font-size:20px;color:#161616">-</div><div class="a t" style="left:18.5px;top:446.8px;height:30px;line-height:30px;font-size:20px;color:#161616">产品类型<span style="margin-left:1.5px">:</span></div><div class="a t" style="left:128px;top:446.4px;height:30px;line-height:30px;font-size:20px;color:#161616">-</div><div class="a t" style="left:18.5px;top:489.8px;height:30px;line-height:30px;font-size:20px;color:#161616">订货号<span style="margin-left:1.5px">:</span></div><div class="a t" style="left:128px;top:489.4px;height:30px;line-height:30px;font-size:20px;color:#161616">-</div><div class="a t" style="left:18.5px;top:532.8px;height:30px;line-height:30px;font-size:20px;color:#161616">固件版本<span style="margin-left:1.5px">:</span></div><div class="a" style="left:118px;top:524.5px;width:235.5px;height:41px;background:#a9a9aa;border-radius:5px"></div><svg class="a" style="left:326px;top:543px" width="20" height="11" viewBox="0 0 20 11" ><path d="M1.5 1.5 L10 9 L18.5 1.5" fill="none" stroke="#98989a" stroke-width="3.4"/></svg></div>
<div class="a" style="left:2488.3px;top:1341px;width:8.4px;height:500px;background:#909090;border-radius:4.2px"></div>
<div class="a" style="left:2131px;top:1898.2px;width:339px;height:7.8px;background:#909090;border-radius:3.9px"></div>
<div class="a" style="left:2496.6px;top:91px;width:3.4px;height:1815px;background:#8196be"></div>
<div class="a" style="left:2500px;top:91px;width:57px;height:1815px;background:#9ba6b9"></div>
<div class="a" style="left:2500px;top:91px;width:57px;height:60px;background:#8899b7"></div>
<div class="a" style="left:2554px;top:91px;width:3px;height:60px;background:#1b55c0"></div>
<svg class="a" style="left:2510px;top:104.4px" width="35.5" height="29" viewBox="0 0 35.5 29" ><path d="M5.4 1.6 a2 2 0 0 1 1.9 -1.6 H28.2 a2 2 0 0 1 1.9 1.6 L34.4 16.6 H1.1 Z" fill="#0343a1"/><rect x="0" y="17.2" width="35.5" height="11.8" rx="2.4" fill="#27317a"/><rect x="26.4" y="22.2" width="5" height="2.4" rx="0.6" fill="#b7c2d6"/></svg>
<div class="a" style="left:0px;top:1906px;width:2557px;height:36px;background:#005992"></div>
<div class="a t" style="left:25px;top:1908.5px;height:34px;line-height:34px;font-size:19.9px;color:#b4b7ba">语言服务空闲</div>
<svg class="a" style="left:166px;top:1914px" width="21" height="21" viewBox="0 0 21 21" ><circle cx="10.5" cy="10.5" r="9.4" fill="none" stroke="#b4b7ba" stroke-width="1.5"/><path d="M6.6 6.6 L14.4 14.4 M14.4 6.6 L6.6 14.4" stroke="#b4b7ba" stroke-width="1.5"/></svg>
<div class="a t" style="left:192.5px;top:1908.5px;height:34px;line-height:34px;font-size:19.6px;color:#b4b7ba">0</div>
<svg class="a" style="left:210px;top:1914px" width="21" height="20" viewBox="0 0 21 20" ><path d="M10.5 1.6 L19.8 18.6 H1.2 Z" fill="none" stroke="#b4b7ba" stroke-width="1.5" stroke-linejoin="round"/><path d="M10.5 7.4 V13" stroke="#b4b7ba" stroke-width="1.5"/><circle cx="10.5" cy="15.6" r="0.9" fill="#b4b7ba"/></svg>
<div class="a t" style="left:237px;top:1908.5px;height:34px;line-height:34px;font-size:19.6px;color:#b4b7ba">0</div>
<div class="a t" style="left:268.5px;top:1908.5px;height:34px;line-height:34px;font-size:19.8px;color:#b4b7ba">ClientID-5e832a23-7b8e-4a04-a88e-d9235d1c05b9</div>
<svg class="a" style="left:2294.5px;top:1914px" width="19" height="22" viewBox="0 0 19 22" ><path d="M2 16.6 C4 14.6 3.6 12 3.6 9 a5.9 5.9 0 0 1 11.8 0 C15.4 12 15 14.6 17 16.6 Z" fill="none" stroke="#b4b7ba" stroke-width="1.5" stroke-linejoin="round"/><path d="M7.2 19 a2.4 2.4 0 0 0 4.6 0" fill="none" stroke="#b4b7ba" stroke-width="1.5"/></svg>
<svg class="a" style="left:2342px;top:1916px" width="21.5" height="18" viewBox="0 0 21.5 18" ><rect x="0.8" y="0.8" width="19.9" height="16.4" rx="1" fill="none" stroke="#b4b7ba" stroke-width="1.5"/><path d="M1 6.2 H20.5" stroke="#b4b7ba" stroke-width="1.5"/></svg>
<svg class="a" style="left:2384px;top:1909px" width="28" height="29" viewBox="0 0 28 29" ><path d="M11 11 V1 H26.6 V20.6 H18.4" fill="none" stroke="#b4b7ba" stroke-width="1.4"/><path d="M15.4 3.4v6M18.6 3.6v4" stroke="#b4b7ba" stroke-width="1"/><rect x="20.6" y="3.6" width="3" height="4" fill="none" stroke="#b4b7ba" stroke-width="0.9"/><rect x="18.8" y="11.0" width="1.1" height="1.1" fill="#b4b7ba"/><rect x="18.8" y="13.3" width="1.1" height="1.1" fill="#b4b7ba"/><rect x="18.8" y="15.6" width="1.1" height="1.1" fill="#b4b7ba"/><rect x="21.0" y="11.0" width="1.1" height="1.1" fill="#b4b7ba"/><rect x="21.0" y="13.3" width="1.1" height="1.1" fill="#b4b7ba"/><rect x="21.0" y="15.6" width="1.1" height="1.1" fill="#b4b7ba"/><rect x="23.200000000000003" y="11.0" width="1.1" height="1.1" fill="#b4b7ba"/><rect x="23.200000000000003" y="13.3" width="1.1" height="1.1" fill="#b4b7ba"/><rect x="23.200000000000003" y="15.6" width="1.1" height="1.1" fill="#b4b7ba"/><rect x="0.8" y="11.8" width="15.4" height="11" rx="1.6" fill="none" stroke="#b4b7ba" stroke-width="1.5"/><path d="M5 17 L7.8 19.8 L12.4 14.6" fill="none" stroke="#b4b7ba" stroke-width="1.5"/><path d="M8.5 23v3.4M1.5 27.2h14" stroke="#b4b7ba" stroke-width="1.5"/><rect x="6.4" y="25.8" width="4.2" height="3" fill="#b4b7ba"/></svg>
<div class="a t" style="left:2428px;top:1907.4px;height:34px;line-height:34px;font-size:18px;color:#b4b7ba">在线设备</div>
<div class="a t" style="left:2516.6px;top:1906.4px;height:34px;line-height:34px;font-size:27px;font-weight:bold;color:#b4b7ba">0</div>
<div class="a" style="left:2384px;top:1938px;width:148px;height:1.3px;background:#b4b7ba"></div>
<div class="a" style="left:789.6px;top:396.5px;width:982px;height:1144.6px;border:5.2px solid #ff1d12;border-radius:6px"></div>
<div class="a" style="left:812.9px;top:426px;width:932.5px;height:1091.5px;box-shadow:0 4px 22px 2px rgba(0,0,20,0.42), 0 0 6px rgba(0,0,20,0.2)"><div class="a" style="left:0px;top:60px;width:932.5px;height:951.5px;background:#f8faff"></div><div class="a" style="left:0px;top:0px;width:932.5px;height:60px;background:#e9effd;box-shadow:0 4px 10px rgba(60,70,100,0.28)"></div><div class="a t" style="left:20px;top:10.5px;height:40px;line-height:40px;font-size:21.8px;color:#2d2d2d;letter-spacing:-0.15px">添加网络全局变量表</div><svg class="a" style="left:892px;top:22.2px" width="14.6" height="14.6" viewBox="0 0 14.6 14.6" ><path d="M0.7 0.7 L13.9 13.9 M13.9 0.7 L0.7 13.9" stroke="#2b2b2b" stroke-width="1.6"/></svg><div class="a t" style="left:138.10000000000002px;top:128px;height:30px;line-height:30px;font-size:20px;color:#333">名称</div><div class="a t" style="left:138.10000000000002px;top:195px;height:30px;line-height:30px;font-size:20px;color:#333">命名空间</div><div class="a t" style="left:138.10000000000002px;top:321.3px;height:30px;line-height:30px;font-size:20px;color:#333">任务</div><div class="a t" style="left:138.10000000000002px;top:387.6px;height:30px;line-height:30px;font-size:20px;color:#333">类型</div><div class="a t" style="left:138.10000000000002px;top:454.8px;height:30px;line-height:30px;font-size:20px;color:#333">网口</div><div class="a t" style="left:138.10000000000002px;top:520px;height:30px;line-height:30px;font-size:20px;color:#333">本地IP地址</div><div class="a t" style="left:138.10000000000002px;top:587px;height:30px;line-height:30px;font-size:20px;color:#333">本地端口</div><div class="a t" style="left:138.10000000000002px;top:653.8px;height:30px;line-height:30px;font-size:20px;color:#333">通讯协议</div><div class="a t" style="left:138.10000000000002px;top:720.4px;height:30px;line-height:30px;font-size:20px;color:#333">传输周期</div><div class="a t" style="left:138.10000000000002px;top:880px;height:30px;line-height:30px;font-size:20px;color:#333">注释</div><div class="a" style="left:379.1px;top:123px;width:420px;height:40px;border-radius:5px;background:#fff;border:1.2px solid #e9e9ec"><div class="a t" style="left:13.6px;top:0px;height:38px;line-height:38px;font-size:20px;color:#333">NGVS_S1</div></div><div class="a" style="left:379.1px;top:190px;width:420px;height:40px;border-radius:5px;background:#f5f5f5;border:1.2px solid #f0f0f0"><div class="a t" style="left:13.6px;top:-1.4px;height:38px;line-height:38px;font-size:20px;color:#333">STD</div></div><svg class="a" style="left:379.1px;top:256px" width="20" height="20" viewBox="0 0 20 20" ><rect width="20" height="20" rx="3.8" fill="#2878f5"/><path d="M4 10.2 L8.4 14.8 L16.2 5.6" fill="none" stroke="#fff" stroke-width="2"/></svg><div class="a t" style="left:413.1px;top:252.0px;height:30px;line-height:30px;font-size:20px;color:#333">跟随默认</div><svg class="a" style="left:553.1px;top:256px" width="20" height="20" viewBox="0 0 20 20" ><rect x="0.7" y="0.7" width="18.6" height="18.6" rx="3.6" fill="#fff" stroke="#2878f5" stroke-width="1.4"/></svg><div class="a t" style="left:586.5000000000001px;top:252.0px;height:30px;line-height:30px;font-size:20px;color:#333">跟随NGVS名</div><div class="a" style="left:379.1px;top:316px;width:420px;height:41px;border-radius:5px;background:#fff;border:1.6px solid #2f7cf6"><div class="a t" style="left:12.4px;top:1.6px;height:38px;line-height:38px;font-size:20px;color:#222">自动更新</div><svg class="a" style="left:392px;top:15px" width="19" height="11" viewBox="0 0 19 11" ><path d="M1.8 2 L9.5 9 L17.2 2" fill="none" stroke="#555" stroke-width="3.5" stroke-linecap="round" stroke-linejoin="miter"/></svg></div><svg class="a" style="left:377.35px;top:390.25px" width="23.5" height="23.5" viewBox="0 0 23.5 23.5" ><circle cx="11.75" cy="11.75" r="10.9" fill="#fff" stroke="#2878f5" stroke-width="1.6"/><circle cx="11.75" cy="11.75" r="6.1" fill="#2878f5"/></svg><div class="a t" style="left:413.1px;top:388.5px;height:30px;line-height:30px;font-size:20px;color:#333">发送方</div><svg class="a" style="left:551.0500000000001px;top:390.25px" width="23.5" height="23.5" viewBox="0 0 23.5 23.5" ><circle cx="11.75" cy="11.75" r="10.9" fill="#fff" stroke="#2878f5" stroke-width="1.6"/></svg><div class="a t" style="left:586.5000000000001px;top:388.5px;height:30px;line-height:30px;font-size:20px;color:#333">接收方</div><div class="a" style="left:379.1px;top:449.3px;width:420px;height:41px;border-radius:5px;background:#fff;border:1.2px solid #e9e9ec"><div class="a t" style="left:12.4px;top:1px;height:39px;line-height:39px;font-size:20px;color:#222;transform:scaleX(0.89);transform-origin:0 50%">GE1</div><svg class="a" style="left:392.4px;top:15px" width="19" height="11" viewBox="0 0 19 11" ><path d="M1.8 2 L9.5 9 L17.2 2" fill="none" stroke="#c9c9c9" stroke-width="3.5" stroke-linecap="round" stroke-linejoin="miter"/></svg></div><div class="a" style="left:379.1px;top:515px;width:420px;height:39.5px;border-radius:5px;background:#f5f5f5;border:1.2px solid #f0f0f0"><div class="a t" style="left:45.69999999999995px;top:0;width:60px;text-align:center;height:38px;line-height:39px;font-size:20px;color:#222">192</div><div class="a t" style="left:134.4px;top:0;width:60px;text-align:center;height:38px;line-height:39px;font-size:20px;color:#222">168</div><div class="a t" style="left:222.4px;top:0;width:60px;text-align:center;height:38px;line-height:39px;font-size:20px;color:#222">1</div><div class="a t" style="left:311.1px;top:0;width:60px;text-align:center;height:38px;line-height:39px;font-size:20px;color:#222">1</div><div class="a t" style="left:93.4px;top:0;width:20px;text-align:center;height:38px;line-height:39px;font-size:20px;color:#222">.</div><div class="a t" style="left:182.8000000000001px;top:0;width:20px;text-align:center;height:38px;line-height:39px;font-size:20px;color:#222">.</div><div class="a t" style="left:271.1px;top:0;width:20px;text-align:center;height:38px;line-height:39px;font-size:20px;color:#222">.</div></div><div class="a" style="left:379.1px;top:582px;width:420px;height:39.6px;border-radius:5px;background:#fff;border:1.2px solid #e9e9ec"><div class="a t" style="left:13.6px;top:-1.4px;height:38px;line-height:38px;font-size:20px;color:#333">6000</div></div><div class="a" style="left:379.1px;top:648.4px;width:420px;height:41px;border-radius:5px;background:#fff;border:1.2px solid #e9e9ec"><div class="a t" style="left:12.4px;top:1.8px;height:39px;line-height:39px;font-size:20px;color:#222">UDP（组播)</div><svg class="a" style="left:392.4px;top:15px" width="19" height="11" viewBox="0 0 19 11" ><path d="M1.8 2 L9.5 9 L17.2 2" fill="none" stroke="#c9c9c9" stroke-width="3.5" stroke-linecap="round" stroke-linejoin="miter"/></svg></div><div class="a" style="left:379.1px;top:715.7px;width:420px;height:39px;border-radius:5px;background:#fff;border:1.2px solid #e9e9ec;overflow:hidden"><div class="a t" style="left:13.6px;top:-1px;height:37px;line-height:37px;font-size:20px;color:#333">40</div><div class="a" style="left:356px;top:-1.2px;width:64px;height:39px;background:#f5f5f5;border-left:1.2px solid #e9e9ec"></div><div class="a t" style="left:376px;top:0px;height:37px;line-height:37px;font-size:20px;color:#333">ms</div></div><svg class="a" style="left:377.35px;top:776.55px" width="23.5" height="23.5" viewBox="0 0 23.5 23.5" ><circle cx="11.75" cy="11.75" r="10.9" fill="#fff" stroke="#2878f5" stroke-width="1.6"/><circle cx="11.75" cy="11.75" r="6.1" fill="#2878f5"/></svg><div class="a t" style="left:413.1px;top:774.8px;height:30px;line-height:30px;font-size:20px;color:#333">循环传输</div><svg class="a" style="left:551.0500000000001px;top:776.55px" width="23.5" height="23.5" viewBox="0 0 23.5 23.5" ><circle cx="11.75" cy="11.75" r="10.9" fill="#fff" stroke="#2878f5" stroke-width="1.6"/></svg><div class="a t" style="left:586.5000000000001px;top:774.8px;height:30px;line-height:30px;font-size:20px;color:#333">变化传输</div><div class="a" style="left:379.1px;top:835.5px;width:420px;height:119px;border-radius:5px;background:#fff;border:1.2px solid #e9e9ec"></div><div class="a" style="left:0px;top:1011.5px;width:932.5px;height:80px;background:#fff;box-shadow:0 -3px 8px rgba(80,100,150,0.12)"></div><svg class="a" style="left:58.10000000000002px;top:1041.8px" width="20" height="20" viewBox="0 0 20 20" ><rect width="20" height="20" rx="3.8" fill="#2878f5"/><path d="M4 10.2 L8.4 14.8 L16.2 5.6" fill="none" stroke="#fff" stroke-width="2"/></svg><div class="a t" style="left:99.60000000000002px;top:1038.0px;height:30px;line-height:30px;font-size:20px;color:#666">添加后打开</div><div class="a" style="left:596.4px;top:1032px;width:132.5px;height:39.5px;background:#d3e3fd;border:1.2px solid #a9c7f7;border-radius:4px;text-align:center;line-height:38.6px;padding-right:6px;font-size:20px;color:#2d78ee;white-space:pre">确 定</div><div class="a" style="left:749.1px;top:1032px;width:133.2px;height:39.5px;background:#f3f7ff;border:1.2px solid #c9dbf9;border-radius:4px;text-align:center;line-height:38.6px;padding-right:6px;font-size:20px;color:#2d78ee;white-space:pre">取 消</div></div>
</body></html>
